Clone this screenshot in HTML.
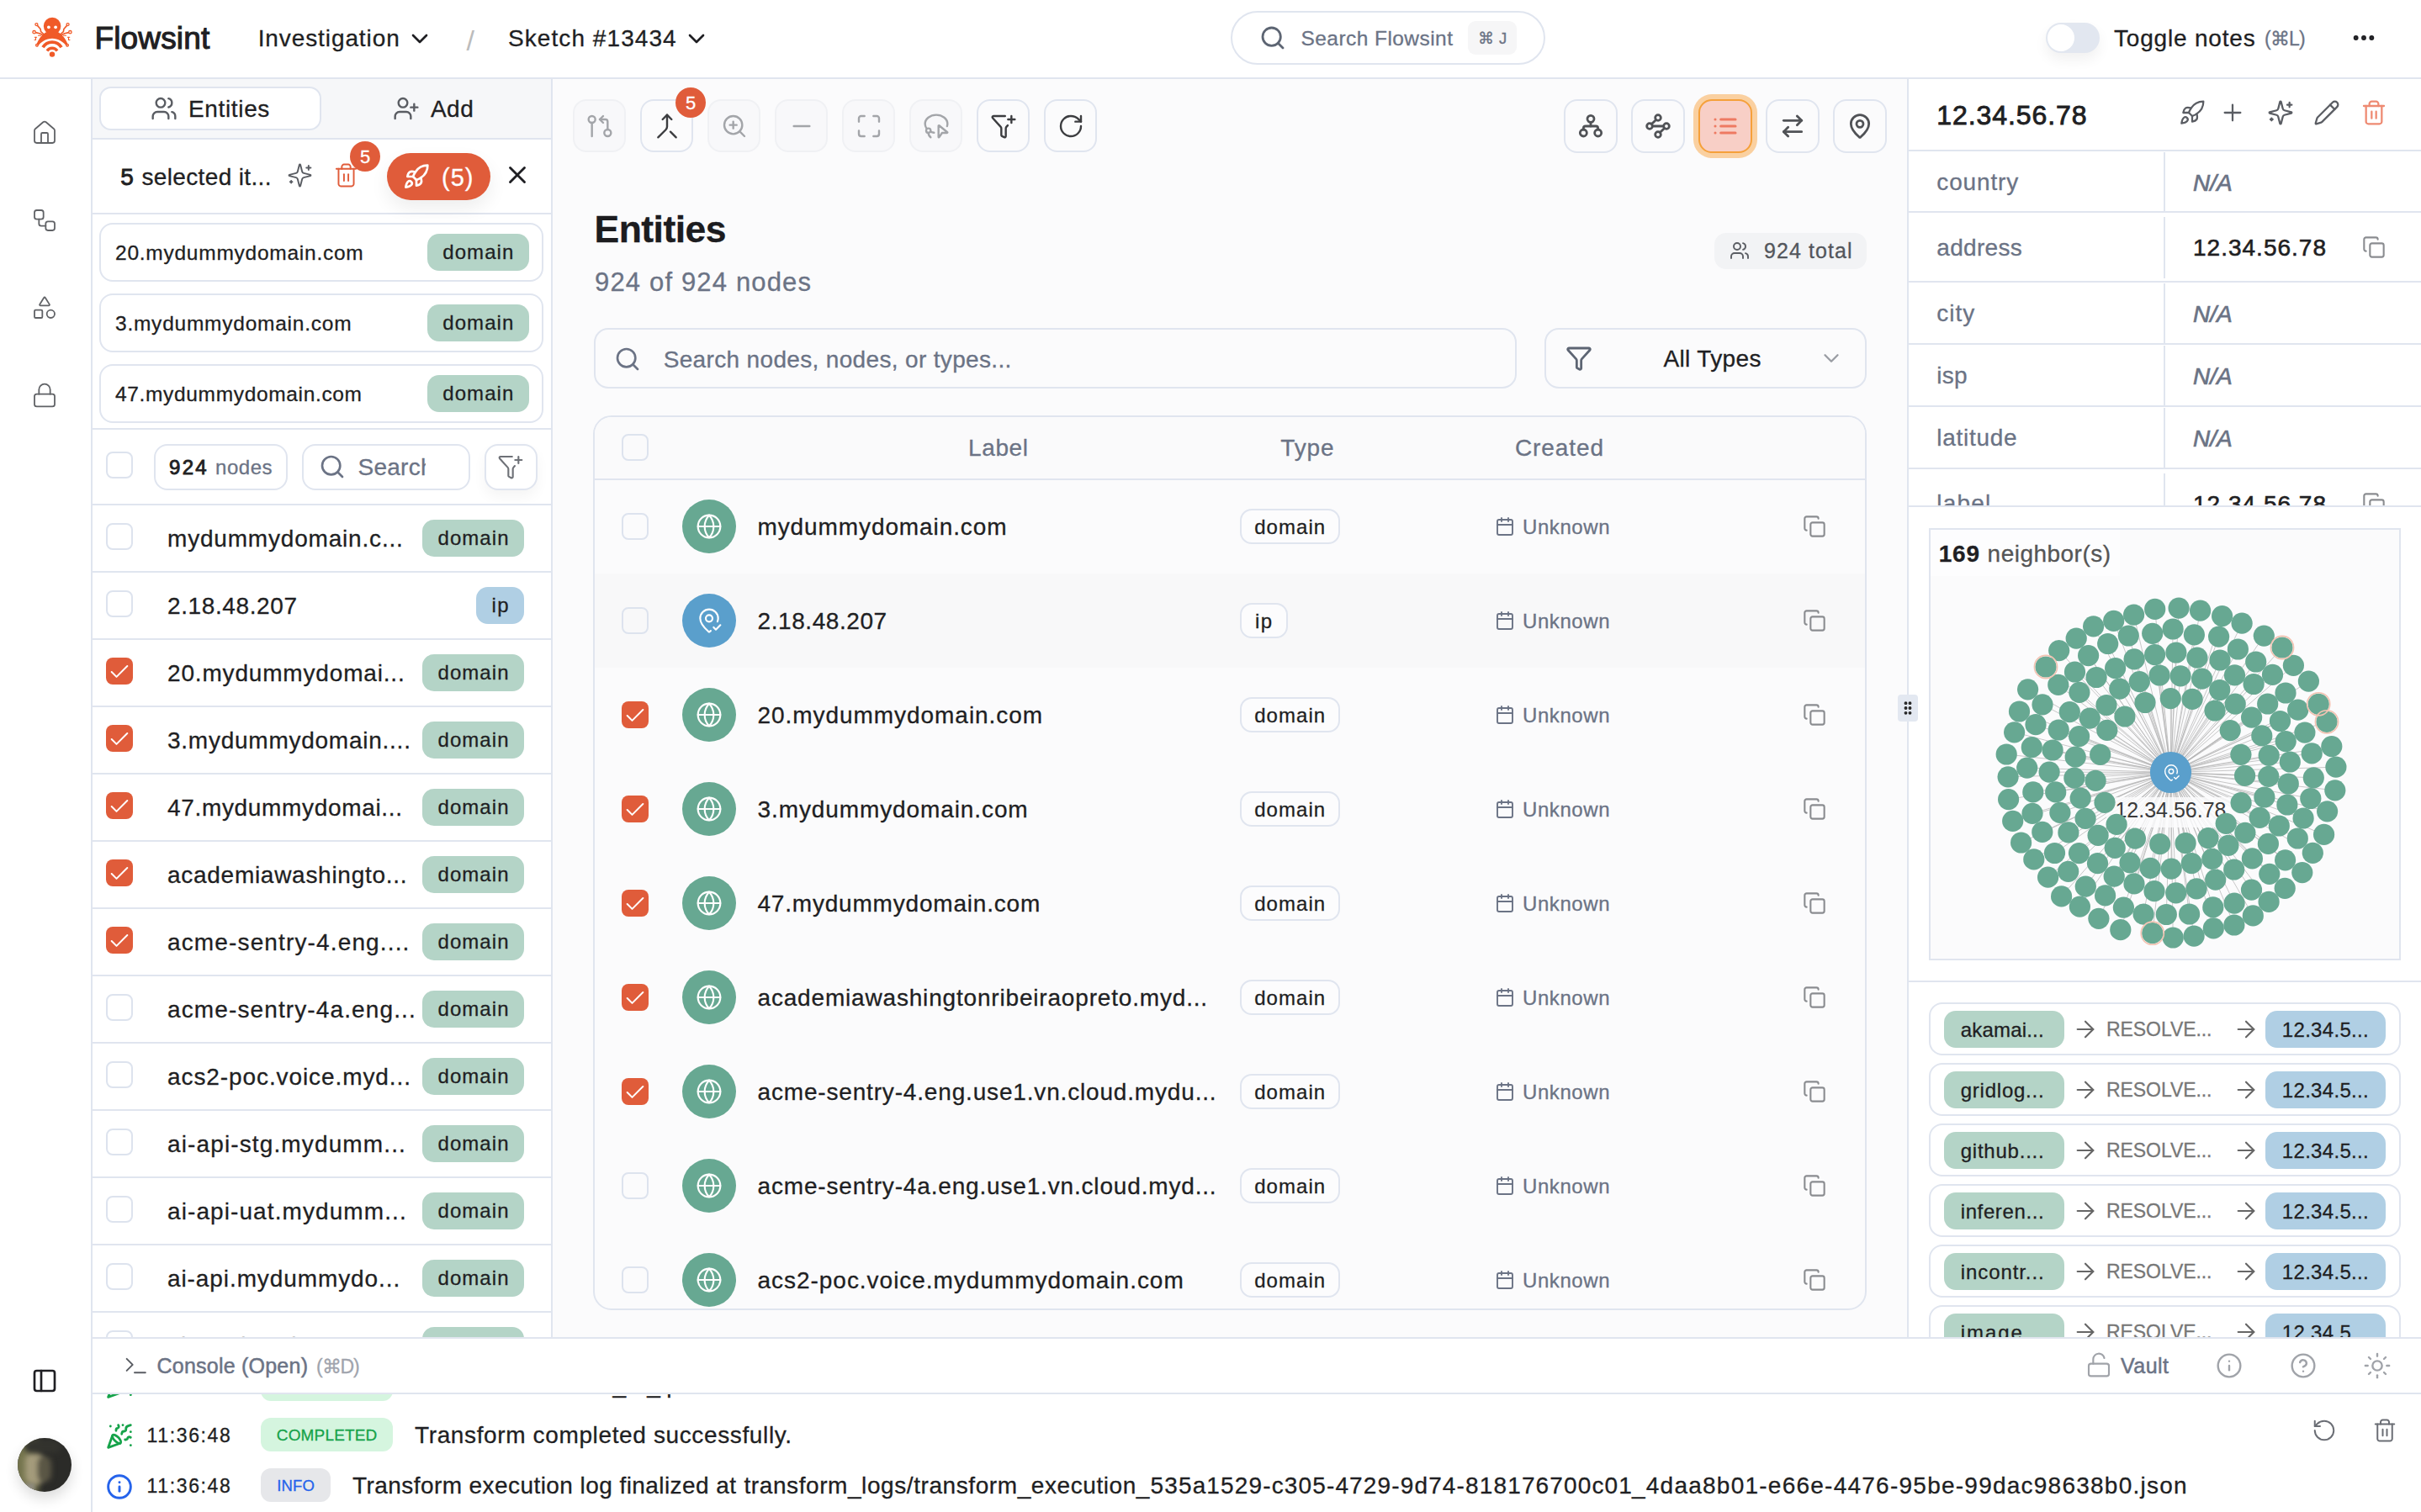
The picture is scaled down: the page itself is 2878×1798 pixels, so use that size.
<!DOCTYPE html><html lang="en"><head><meta charset="utf-8"><title>Flowsint</title><style>
*{box-sizing:border-box;margin:0;padding:0}
html,body{width:2878px;height:1798px;overflow:hidden;background:#fff;font-family:"Liberation Sans",sans-serif;color:#1f1f23}
.t{position:absolute;white-space:nowrap;line-height:1;-webkit-text-stroke:0.3px}
.i{position:absolute;fill:none;stroke:currentColor;stroke-linecap:round;stroke-linejoin:round;overflow:visible}
.b{position:absolute}
.clip{position:absolute;overflow:hidden}
.ln{position:absolute;background:#e0e5ef}
.cb{position:absolute;width:32px;height:32px;border:2px solid #dde3ee;border-radius:8px;background:transparent}
.cbc{position:absolute;width:32px;height:32px;border-radius:8px;background:#e05c3a}
.pill{position:absolute;border-radius:14px}
</style></head><body>
<div class="b" style="left:657px;top:94px;width:1611px;height:1498px;background:#fbfbfc"></div>
<div class="b" style="left:0px;top:0px;width:2878px;height:92px;background:#fff"></div>
<div class="ln" style="left:0;top:92px;width:2878px;height:2px"></div>
<svg class="b" style="left:36px;top:19px;width:52px;height:52px" viewBox="0 0 52 52">
<g fill="#f05a28" stroke="none">
<circle cx="26.1" cy="12" r="10.3"/>
<path d="M18.2 19.5Q10.5 24.5 6.6 35.6L8.6 36.4A20.6 20.6 0 0 1 43.4 36.4L45.4 35.600Q41.500 24.500 33.800 19.500Z"/>
<circle cx="26" cy="45.6" r="3.2"/>
</g>
<circle cx="21.9" cy="13.3" r="1.9" fill="#fff"/><circle cx="30.100" cy="13.300" r="1.900" fill="#fff"/>
<g fill="none" stroke="#f05a28" stroke-linecap="butt">
<path d="M14.98 37.300A13 13 0 0 1 37.020 37.300" stroke-width="3.800"/>
<path d="M19.980 41.400A7.350 7.350 0 0 1 32.020 41.400" stroke-width="3.400"/>
</g>
<g fill="none" stroke="#f05a28" stroke-linecap="round" stroke-linejoin="round" stroke-width="1.600">
<path d="M17 22.500L12.600 18.600L12.100 15.500L8.500 11.400"/><path d="M35 22.500L39.400 18.600L39.900 15.500L43.500 11.400"/>
<path d="M16.500 23.500L11 20.800L6.200 19.600"/><path d="M35.500 23.500L41 20.800L45.800 19.600"/>
<path d="M9.500 23.300h2.600l1.800 1.700M5.200 25.300h2.500M6.500 25.300v3.200M5 28.500h1.500" stroke-width="1"/>
<path d="M42.500 23.300h-2.600l-1.800 1.700M46.800 25.300h-2.500M45.500 25.300v3.200M47 28.500h-1.500" stroke-width="1"/>
</g>
<g fill="#fff" stroke="#f05a28" stroke-width="1.300">
<circle cx="7.400" cy="10.100" r="1.500"/><circle cx="44.600" cy="10.100" r="1.500"/>
<circle cx="4.600" cy="19.200" r="1.700"/><circle cx="47.400" cy="19.200" r="1.700"/>
<circle cx="7.900" cy="34.800" r="1.300"/><circle cx="44.100" cy="34.800" r="1.300"/>
</g>
</svg>
<div class="t" style="left:112.4px;top:27.0px;font-size:37px;color:#1f1f23;letter-spacing:0.17px;-webkit-text-stroke:1.1px #1f1f23;">Flowsint</div>
<div class="t" style="left:306.7px;top:32.0px;font-size:28px;color:#1f1f23;letter-spacing:0.90px;">Investigation</div>
<svg class="i" style="left:483.0px;top:30.0px;width:32px;height:32px;color:#1f1f23;stroke-width:2;" viewBox="0 0 24 24"><path d="m6 9 6 6 6-6"/></svg>
<div class="t" style="left:554.6px;top:31.0px;font-size:34px;color:#bcbcbc;letter-spacing:0.43px;-webkit-text-stroke:0;">/</div>
<div class="t" style="left:604.0px;top:32.0px;font-size:28px;color:#1f1f23;letter-spacing:1.07px;">Sketch #13434</div>
<svg class="i" style="left:812.0px;top:30.0px;width:32px;height:32px;color:#1f1f23;stroke-width:2;" viewBox="0 0 24 24"><path d="m6 9 6 6 6-6"/></svg>
<div class="b" style="left:1463px;top:13px;width:374px;height:64px;border:2px solid #e0e5ef;border-radius:32px;background:#fff"></div>
<svg class="i" style="left:1497.0px;top:29.0px;width:32px;height:32px;color:#5d6573;stroke-width:2.1;" viewBox="0 0 24 24"><circle cx="11" cy="11" r="8"/><path d="m21 21-4.3-4.3"/></svg>
<div class="t" style="left:1546.5px;top:34.0px;font-size:24.5px;color:#6b7385;letter-spacing:0.44px;">Search Flowsint</div>
<div class="b" style="left:1744.5px;top:25px;width:58.5px;height:39.5px;background:#f6f6f7;border-radius:9px"></div>
<div class="t" style="left:1757.0px;top:37.0px;font-size:18.5px;color:#6b7385;letter-spacing:0.37px;">⌘ J</div>
<div class="b" style="left:2432px;top:27px;width:64px;height:36px;background:#e2e7f0;border-radius:18px;box-shadow:0 8px 16px rgba(0,0,0,.06)"></div>
<div class="b" style="left:2434px;top:29px;width:32px;height:32px;background:#fff;border-radius:16px"></div>
<div class="t" style="left:2513.0px;top:32.0px;font-size:28px;color:#1f1f23;letter-spacing:0.81px;">Toggle notes</div>
<div class="t" style="left:2692.0px;top:35.0px;font-size:23px;color:#6b7385;letter-spacing:-0.79px;">(⌘L)</div>
<svg class="i" style="left:2794.0px;top:29.0px;width:32px;height:32px;color:#1f1f23;stroke-width:2.4;" viewBox="0 0 24 24"><circle cx="12" cy="12" r="1"/><circle cx="19" cy="12" r="1"/><circle cx="5" cy="12" r="1"/></svg>
<div class="b" style="left:0px;top:94px;width:108px;height:1704px;background:#fff"></div>
<div class="ln" style="left:108px;top:94px;width:2px;height:1704px"></div>
<svg class="i" style="left:37.0px;top:142.3px;width:32px;height:32px;color:#606266;stroke-width:1.35;" viewBox="0 0 24 24"><path d="M15 21v-8a1 1 0 0 0-1-1h-4a1 1 0 0 0-1 1v8"/><path d="M3 10a2 2 0 0 1 .709-1.528l7-5.999a2 2 0 0 1 2.582 0l7 5.999A2 2 0 0 1 21 10v9a2 2 0 0 1-2 2H5a2 2 0 0 1-2-2z"/></svg>
<svg class="i" style="left:37.0px;top:246.0px;width:32px;height:32px;color:#606266;stroke-width:1.35;" viewBox="0 0 24 24"><rect width="8" height="8" x="3" y="3" rx="2"/><path d="M7 11v4a2 2 0 0 0 2 2h4"/><rect width="8" height="8" x="13" y="13" rx="2"/></svg>
<svg class="i" style="left:37.0px;top:350.0px;width:32px;height:32px;color:#606266;stroke-width:1.35;" viewBox="0 0 24 24"><path d="M8.3 10a.7.7 0 0 1-.626-1.079L11.4 3a.7.7 0 0 1 1.198-.043L16.3 8.9a.7.7 0 0 1-.572 1.1Z"/><rect x="3" y="14" width="7" height="7" rx="1"/><circle cx="17.5" cy="17.5" r="3.5"/></svg>
<svg class="i" style="left:37.0px;top:454.0px;width:32px;height:32px;color:#606266;stroke-width:1.35;" viewBox="0 0 24 24"><rect width="18" height="11" x="3" y="11" rx="2" ry="2"/><path d="M7 11V7a5 5 0 0 1 10 0v4"/></svg>
<svg class="i" style="left:37.0px;top:1626.0px;width:32px;height:32px;color:#1f1f23;stroke-width:2;" viewBox="0 0 24 24"><rect width="18" height="18" x="3" y="3" rx="2"/><path d="M9 3v18"/></svg>
<div class="clip" style="left:21px;top:1710px;width:64px;height:64px;border-radius:32px;overflow:hidden;background:#2b2b28;box-shadow:0 8px 16px rgba(0,0,0,.14)"><div class="b" style="left:-6px;top:4px;width:30px;height:64px;background:#76764f;filter:blur(4px)"></div><div class="b" style="left:9px;top:16px;width:22px;height:40px;border-radius:11px;background:#a59c7c;filter:blur(3px)"></div><div class="b" style="left:24px;top:22px;width:16px;height:30px;border-radius:8px;background:#5a5645;filter:blur(3px)"></div><div class="b" style="left:8px;top:2px;width:44px;height:16px;border-radius:10px;background:#33332e;filter:blur(3px)"></div><div class="b" style="left:8px;top:54px;width:12px;height:12px;background:#8f8b80;filter:blur(2px)"></div></div>
<div class="b" style="left:110px;top:94px;width:545px;height:1498px;background:#fff"></div>
<div class="ln" style="left:654.6px;top:94px;width:2px;height:1498px"></div>
<div class="b" style="left:110px;top:94px;width:545px;height:70px;background:#f6f7f9"></div>
<div class="ln" style="left:110px;top:164px;width:545px;height:2px"></div>
<div class="b" style="left:118px;top:103px;width:264px;height:52px;background:#fff;border:2px solid #e0e5ef;border-radius:14px"></div>
<svg class="i" style="left:179.0px;top:113.0px;width:32px;height:32px;color:#5a5d63;stroke-width:1.8;" viewBox="0 0 24 24"><path d="M16 21v-2a4 4 0 0 0-4-4H6a4 4 0 0 0-4 4v2"/><circle cx="9" cy="7" r="4"/><path d="M22 21v-2a4 4 0 0 0-3-3.87"/><path d="M16 3.13a4 4 0 0 1 0 7.75"/></svg>
<div class="t" style="left:224.0px;top:116.0px;font-size:28px;color:#1f1f23;letter-spacing:0.65px;">Entities</div>
<svg class="i" style="left:467.0px;top:113.0px;width:32px;height:32px;color:#5a5d63;stroke-width:1.8;" viewBox="0 0 24 24"><path d="M16 21v-2a4 4 0 0 0-4-4H6a4 4 0 0 0-4 4v2"/><circle cx="9" cy="7" r="4"/><line x1="19" x2="19" y1="8" y2="14"/><line x1="22" x2="16" y1="11" y2="11"/></svg>
<div class="t" style="left:512.0px;top:116.0px;font-size:28px;color:#1f1f23;letter-spacing:0.44px;">Add</div>
<div class="ln" style="left:110px;top:253px;width:545px;height:2px"></div>
<div class="t" style="left:143.3px;top:197.0px;font-size:28px;color:#1f1f23;letter-spacing:0.70px;-webkit-text-stroke:0.9px #1f1f23;">5</div>
<div class="t" style="left:168.5px;top:197.0px;font-size:28px;color:#1f1f23;letter-spacing:0.35px;">selected it...</div>
<svg class="i" style="left:340.8px;top:192.5px;width:31px;height:31px;color:#5a5d63;stroke-width:1.5;" viewBox="0 0 24 24"><path d="M9.937 15.5A2 2 0 0 0 8.5 14.063l-6.135-1.582a.5.5 0 0 1 0-.962L8.5 9.936A2 2 0 0 0 9.937 8.5l1.582-6.135a.5.5 0 0 1 .963 0L14.063 8.5A2 2 0 0 0 15.5 9.937l6.135 1.581a.5.5 0 0 1 0 .964L15.5 14.063a2 2 0 0 0-1.437 1.437l-1.582 6.135a.5.5 0 0 1-.963 0z"/><path d="M20 3v4"/><path d="M22 5h-4"/><path d="M4 17v2"/><path d="M5 18H3"/></svg>
<svg class="i" style="left:396.0px;top:192.5px;width:31px;height:31px;color:#e05c3a;stroke-width:1.5;" viewBox="0 0 24 24"><path d="M3 6h18"/><path d="M19 6v14c0 1-1 2-2 2H7c-1 0-2-1-2-2V6"/><path d="M8 6V4c0-1 1-2 2-2h4c1 0 2 1 2 2v2"/><line x1="10" x2="10" y1="11" y2="17"/><line x1="14" x2="14" y1="11" y2="17"/></svg>
<div class="b" style="left:416px;top:168px;width:36px;height:36px;background:#e05c3a;border-radius:18px"></div>
<div class="t" style="left:427.9px;top:176.0px;font-size:22px;color:#fff;letter-spacing:0.55px;">5</div>
<div class="b" style="left:460px;top:182px;width:122.5px;height:56px;background:#e05c3a;border-radius:28px;box-shadow:0 10px 22px rgba(0,0,0,.07)"></div>
<svg class="i" style="left:479.0px;top:194.0px;width:32px;height:32px;color:#fff;stroke-width:2;" viewBox="0 0 24 24"><path d="M4.5 16.5c-1.5 1.26-2 5-2 5s3.74-.5 5-2c.71-.84.7-2.13-.09-2.91a2.18 2.18 0 0 0-2.91-.09z"/><path d="m12 15-3-3a22 22 0 0 1 2-3.95A12.88 12.88 0 0 1 22 2c0 2.72-.78 7.5-6 11a22.35 22.35 0 0 1-4 2z"/><path d="M9 12H4s.55-3.03 2-4c1.62-1.08 5 0 5 0"/><path d="M12 15v5s3.03-.55 4-2c1.08-1.62 0-5 0-5"/></svg>
<div class="t" style="left:525.0px;top:197.0px;font-size:29px;color:#fff;letter-spacing:1.03px;">(5)</div>
<svg class="i" style="left:598.0px;top:191.0px;width:34px;height:34px;color:#1f1f23;stroke-width:2;" viewBox="0 0 24 24"><path d="M18 6 6 18"/><path d="m6 6 12 12"/></svg>
<div class="b" style="left:118px;top:264.5px;width:528px;height:70.6px;background:#fff;border:2px solid #e0e5ef;border-radius:16px"></div>
<div class="t" style="left:137.0px;top:289.0px;font-size:24.5px;color:#1f1f23;letter-spacing:0.75px;">20.mydummydomain.com</div>
<div class="pill" style="left:508px;top:278px;width:120.6px;height:43.5px;background:#b4d4c7"></div><div class="t" style="left:526.3px;top:288.0px;font-size:24px;color:#1f1f23;letter-spacing:1.06px;">domain</div>
<div class="b" style="left:118px;top:348.5px;width:528px;height:70.6px;background:#fff;border:2px solid #e0e5ef;border-radius:16px"></div>
<div class="t" style="left:137.0px;top:373.0px;font-size:24.5px;color:#1f1f23;letter-spacing:0.76px;">3.mydummydomain.com</div>
<div class="pill" style="left:508px;top:362px;width:120.6px;height:43.5px;background:#b4d4c7"></div><div class="t" style="left:526.3px;top:372.0px;font-size:24px;color:#1f1f23;letter-spacing:1.06px;">domain</div>
<div class="b" style="left:118px;top:432.5px;width:528px;height:70.6px;background:#fff;border:2px solid #e0e5ef;border-radius:16px"></div>
<div class="t" style="left:137.0px;top:457.0px;font-size:24.5px;color:#1f1f23;letter-spacing:0.66px;">47.mydummydomain.com</div>
<div class="pill" style="left:508px;top:446px;width:120.6px;height:43.5px;background:#b4d4c7"></div><div class="t" style="left:526.3px;top:456.0px;font-size:24px;color:#1f1f23;letter-spacing:1.06px;">domain</div>
<div class="ln" style="left:110px;top:509px;width:545px;height:2px"></div>
<div class="cb" style="left:126px;top:537px"></div>
<div class="b" style="left:182.5px;top:527.5px;width:159px;height:55px;border:2px solid #e0e5ef;border-radius:16px;background:#fff"></div>
<div class="t" style="left:201.0px;top:544.0px;font-size:24px;color:#1f1f23;letter-spacing:2.33px;-webkit-text-stroke:0.9px #1f1f23;">924</div>
<div class="t" style="left:256.0px;top:544.0px;font-size:24px;color:#6b7385;letter-spacing:0.53px;">nodes</div>
<div class="b" style="left:358.5px;top:527.5px;width:200px;height:55px;border:2px solid #e0e5ef;border-radius:16px;background:#fff"></div>
<svg class="i" style="left:378.5px;top:539.0px;width:32px;height:32px;color:#6b7385;stroke-width:2;" viewBox="0 0 24 24"><circle cx="11" cy="11" r="8"/><path d="m21 21-4.3-4.3"/></svg>
<div class="clip" style="left:420px;top:535px;width:85.5px;height:40px"><div class="t" style="left:5.5px;top:7.0px;font-size:28px;color:#6b7385;letter-spacing:0.26px;">Search</div></div>
<div class="b" style="left:576px;top:527.5px;width:62.5px;height:55px;border:2px solid #e0e5ef;border-radius:16px;background:#fff;box-shadow:0 8px 16px rgba(0,0,0,.045)"></div>
<svg class="i" style="left:591.0px;top:539.0px;width:32px;height:32px;color:#6e7177;stroke-width:1.6;" viewBox="0 0 24 24"><path d="M13.354 3H3a1 1 0 0 0-.742 1.67l7.225 7.989A2 2 0 0 1 10 14v6a1 1 0 0 0 .553.895l2 1A1 1 0 0 0 14 21v-7a2 2 0 0 1 .517-1.341l1.218-1.348"/><path d="M16 6h6"/><path d="M19 3v6"/></svg>
<div class="ln" style="left:110px;top:599px;width:545px;height:2px"></div>
<div class="clip" style="left:110px;top:601px;width:545px;height:990px">
<div class="cb" style="left:16px;top:21px"></div>
<div class="t" style="left:89.0px;top:26.0px;font-size:28px;color:#1f1f23;letter-spacing:0.81px;">mydummydomain.c...</div>
<div class="pill" style="left:392px;top:17px;width:121px;height:44px;background:#b4d4c7"></div><div class="t" style="left:410.5px;top:27.0px;font-size:24px;color:#1f1f23;letter-spacing:1.06px;">domain</div>
<div class="ln" style="left:0;top:78px;width:545px;height:2px"></div>
<div class="cb" style="left:16px;top:101px"></div>
<div class="t" style="left:89.0px;top:106.0px;font-size:28px;color:#1f1f23;letter-spacing:0.61px;">2.18.48.207</div>
<div class="pill" style="left:456px;top:97px;width:57px;height:44px;background:#b0cfe4"></div><div class="t" style="left:474.5px;top:107.0px;font-size:24px;color:#1f1f23;letter-spacing:1.32px;">ip</div>
<div class="ln" style="left:0;top:158px;width:545px;height:2px"></div>
<div class="cbc" style="left:16px;top:181px"></div><svg class="i" style="left:18.0px;top:183.5px;width:28px;height:28px;color:#fff;stroke-width:1.7;" viewBox="0 0 24 24"><path d="M20 6 9 17l-5-5"/></svg>
<div class="t" style="left:89.0px;top:186.0px;font-size:28px;color:#1f1f23;letter-spacing:0.83px;">20.mydummydomai...</div>
<div class="pill" style="left:392px;top:177px;width:121px;height:44px;background:#b4d4c7"></div><div class="t" style="left:410.5px;top:187.0px;font-size:24px;color:#1f1f23;letter-spacing:1.06px;">domain</div>
<div class="ln" style="left:0;top:238px;width:545px;height:2px"></div>
<div class="cbc" style="left:16px;top:261px"></div><svg class="i" style="left:18.0px;top:263.5px;width:28px;height:28px;color:#fff;stroke-width:1.7;" viewBox="0 0 24 24"><path d="M20 6 9 17l-5-5"/></svg>
<div class="t" style="left:89.0px;top:266.0px;font-size:28px;color:#1f1f23;letter-spacing:0.75px;">3.mydummydomain....</div>
<div class="pill" style="left:392px;top:257px;width:121px;height:44px;background:#b4d4c7"></div><div class="t" style="left:410.5px;top:267.0px;font-size:24px;color:#1f1f23;letter-spacing:1.06px;">domain</div>
<div class="ln" style="left:0;top:318px;width:545px;height:2px"></div>
<div class="cbc" style="left:16px;top:341px"></div><svg class="i" style="left:18.0px;top:343.5px;width:28px;height:28px;color:#fff;stroke-width:1.7;" viewBox="0 0 24 24"><path d="M20 6 9 17l-5-5"/></svg>
<div class="t" style="left:89.0px;top:346.0px;font-size:28px;color:#1f1f23;letter-spacing:0.67px;">47.mydummydomai...</div>
<div class="pill" style="left:392px;top:337px;width:121px;height:44px;background:#b4d4c7"></div><div class="t" style="left:410.5px;top:347.0px;font-size:24px;color:#1f1f23;letter-spacing:1.06px;">domain</div>
<div class="ln" style="left:0;top:398px;width:545px;height:2px"></div>
<div class="cbc" style="left:16px;top:421px"></div><svg class="i" style="left:18.0px;top:423.5px;width:28px;height:28px;color:#fff;stroke-width:1.7;" viewBox="0 0 24 24"><path d="M20 6 9 17l-5-5"/></svg>
<div class="t" style="left:89.0px;top:426.0px;font-size:28px;color:#1f1f23;letter-spacing:0.72px;">academiawashingto...</div>
<div class="pill" style="left:392px;top:417px;width:121px;height:44px;background:#b4d4c7"></div><div class="t" style="left:410.5px;top:427.0px;font-size:24px;color:#1f1f23;letter-spacing:1.06px;">domain</div>
<div class="ln" style="left:0;top:478px;width:545px;height:2px"></div>
<div class="cbc" style="left:16px;top:501px"></div><svg class="i" style="left:18.0px;top:503.5px;width:28px;height:28px;color:#fff;stroke-width:1.7;" viewBox="0 0 24 24"><path d="M20 6 9 17l-5-5"/></svg>
<div class="t" style="left:89.0px;top:506.0px;font-size:28px;color:#1f1f23;letter-spacing:1.14px;">acme-sentry-4.eng....</div>
<div class="pill" style="left:392px;top:497px;width:121px;height:44px;background:#b4d4c7"></div><div class="t" style="left:410.5px;top:507.0px;font-size:24px;color:#1f1f23;letter-spacing:1.06px;">domain</div>
<div class="ln" style="left:0;top:558px;width:545px;height:2px"></div>
<div class="cb" style="left:16px;top:581px"></div>
<div class="t" style="left:89.0px;top:586.0px;font-size:28px;color:#1f1f23;letter-spacing:1.12px;">acme-sentry-4a.eng...</div>
<div class="pill" style="left:392px;top:577px;width:121px;height:44px;background:#b4d4c7"></div><div class="t" style="left:410.5px;top:587.0px;font-size:24px;color:#1f1f23;letter-spacing:1.06px;">domain</div>
<div class="ln" style="left:0;top:638px;width:545px;height:2px"></div>
<div class="cb" style="left:16px;top:661px"></div>
<div class="t" style="left:89.0px;top:666.0px;font-size:28px;color:#1f1f23;letter-spacing:0.91px;">acs2-poc.voice.myd...</div>
<div class="pill" style="left:392px;top:657px;width:121px;height:44px;background:#b4d4c7"></div><div class="t" style="left:410.5px;top:667.0px;font-size:24px;color:#1f1f23;letter-spacing:1.06px;">domain</div>
<div class="ln" style="left:0;top:718px;width:545px;height:2px"></div>
<div class="cb" style="left:16px;top:741px"></div>
<div class="t" style="left:89.0px;top:746.0px;font-size:28px;color:#1f1f23;letter-spacing:1.13px;">ai-api-stg.mydumm...</div>
<div class="pill" style="left:392px;top:737px;width:121px;height:44px;background:#b4d4c7"></div><div class="t" style="left:410.5px;top:747.0px;font-size:24px;color:#1f1f23;letter-spacing:1.06px;">domain</div>
<div class="ln" style="left:0;top:798px;width:545px;height:2px"></div>
<div class="cb" style="left:16px;top:821px"></div>
<div class="t" style="left:89.0px;top:826.0px;font-size:28px;color:#1f1f23;letter-spacing:1.09px;">ai-api-uat.mydumm...</div>
<div class="pill" style="left:392px;top:817px;width:121px;height:44px;background:#b4d4c7"></div><div class="t" style="left:410.5px;top:827.0px;font-size:24px;color:#1f1f23;letter-spacing:1.06px;">domain</div>
<div class="ln" style="left:0;top:878px;width:545px;height:2px"></div>
<div class="cb" style="left:16px;top:901px"></div>
<div class="t" style="left:89.0px;top:906.0px;font-size:28px;color:#1f1f23;letter-spacing:0.91px;">ai-api.mydummydo...</div>
<div class="pill" style="left:392px;top:897px;width:121px;height:44px;background:#b4d4c7"></div><div class="t" style="left:410.5px;top:907.0px;font-size:24px;color:#1f1f23;letter-spacing:1.06px;">domain</div>
<div class="ln" style="left:0;top:958px;width:545px;height:2px"></div>
<div class="cb" style="left:16px;top:981px"></div>
<div class="t" style="left:89.0px;top:986.0px;font-size:28px;color:#1f1f23;letter-spacing:0.48px;">ai-services.io.m...</div>
<div class="pill" style="left:392px;top:977px;width:121px;height:44px;background:#b4d4c7"></div><div class="t" style="left:410.5px;top:987.0px;font-size:24px;color:#1f1f23;letter-spacing:1.06px;">domain</div>
<div class="ln" style="left:0;top:1038px;width:545px;height:2px"></div>
</div>
<div class="b" style="left:681px;top:118px;width:63px;height:63px;border:2px solid #f0f1f4;border-radius:16px;background:#f8f8fa"></div>
<svg class="i" style="left:696.5px;top:133.5px;width:32px;height:32px;color:#a3a5a9;stroke-width:1.8;" viewBox="0 0 24 24"><circle cx="5" cy="6" r="3"/><path d="M5 9v12"/><circle cx="19" cy="18" r="3"/><path d="m15 9-3-3 3-3"/><path d="M12 6h5a2 2 0 0 1 2 2v7"/></svg>
<div class="b" style="left:761px;top:118px;width:63px;height:63px;border:2px solid #e0e5ef;border-radius:16px;background:#fbfbfc"></div>
<svg class="i" style="left:776.5px;top:133.5px;width:32px;height:32px;color:#3c3d40;stroke-width:1.8;" viewBox="0 0 24 24"><path d="m8 6 4-4 4 4"/><path d="M12 2v10.3a4 4 0 0 1-1.172 2.872L4 22"/><path d="m20 22-5-5"/></svg>
<div class="b" style="left:841px;top:118px;width:63px;height:63px;border:2px solid #f0f1f4;border-radius:16px;background:#f8f8fa"></div>
<svg class="i" style="left:856.5px;top:133.5px;width:32px;height:32px;color:#a3a5a9;stroke-width:1.8;" viewBox="0 0 24 24"><circle cx="11" cy="11" r="8"/><line x1="21" x2="16.65" y1="21" y2="16.65"/><line x1="11" x2="11" y1="8" y2="14"/><line x1="8" x2="14" y1="11" y2="11"/></svg>
<div class="b" style="left:921px;top:118px;width:63px;height:63px;border:2px solid #f0f1f4;border-radius:16px;background:#f8f8fa"></div>
<svg class="i" style="left:936.5px;top:133.5px;width:32px;height:32px;color:#a3a5a9;stroke-width:1.8;" viewBox="0 0 24 24"><path d="M5 12h14"/></svg>
<div class="b" style="left:1001px;top:118px;width:63px;height:63px;border:2px solid #f0f1f4;border-radius:16px;background:#f8f8fa"></div>
<svg class="i" style="left:1016.5px;top:133.5px;width:32px;height:32px;color:#a3a5a9;stroke-width:1.8;" viewBox="0 0 24 24"><path d="M8 3H5a2 2 0 0 0-2 2v3"/><path d="M21 8V5a2 2 0 0 0-2-2h-3"/><path d="M3 16v3a2 2 0 0 0 2 2h3"/><path d="M16 21h3a2 2 0 0 0 2-2v-3"/></svg>
<div class="b" style="left:1081px;top:118px;width:63px;height:63px;border:2px solid #f0f1f4;border-radius:16px;background:#f8f8fa"></div>
<svg class="i" style="left:1096.5px;top:133.5px;width:32px;height:32px;color:#a3a5a9;stroke-width:1.8;" viewBox="0 0 24 24"><path d="M7 22a5 5 0 0 1-2-4"/><path d="M7 16.93c.96.43 1.96.74 2.99.91"/><path d="M3.34 14A6.8 6.8 0 0 1 2 10c0-4.42 4.48-8 10-8s10 3.58 10 8a7.19 7.19 0 0 1-.33 2"/><path d="M5 18a2 2 0 1 0 0-4 2 2 0 0 0 0 4z"/><path d="M14.33 22h-.09a.35.35 0 0 1-.24-.32v-10a.34.34 0 0 1 .33-.34c.08 0 .15.03.21.08l7.34 6a.33.33 0 0 1-.21.59h-4.49l-2.57 3.85a.35.35 0 0 1-.28.14z"/></svg>
<div class="b" style="left:1161px;top:118px;width:63px;height:63px;border:2px solid #e0e5ef;border-radius:16px;background:#fbfbfc"></div>
<svg class="i" style="left:1176.5px;top:133.5px;width:32px;height:32px;color:#3c3d40;stroke-width:1.8;" viewBox="0 0 24 24"><path d="M13.354 3H3a1 1 0 0 0-.742 1.67l7.225 7.989A2 2 0 0 1 10 14v6a1 1 0 0 0 .553.895l2 1A1 1 0 0 0 14 21v-7a2 2 0 0 1 .517-1.341l1.218-1.348"/><path d="M16 6h6"/><path d="M19 3v6"/></svg>
<div class="b" style="left:1241px;top:118px;width:63px;height:63px;border:2px solid #e0e5ef;border-radius:16px;background:#fbfbfc"></div>
<svg class="i" style="left:1256.5px;top:133.5px;width:32px;height:32px;color:#3c3d40;stroke-width:1.8;" viewBox="0 0 24 24"><path d="M21 12a9 9 0 1 1-9-9c2.52 0 4.93 1 6.74 2.74L21 8"/><path d="M21 3v5h-5"/></svg>
<div class="b" style="left:803px;top:104px;width:36px;height:36px;background:#e05c3a;border-radius:18px"></div>
<div class="t" style="left:814.9px;top:112.0px;font-size:22px;color:#fff;letter-spacing:0.55px;">5</div>
<div class="b" style="left:1859px;top:118px;width:64px;height:64px;border:2px solid #e0e5ef;border-radius:16px;background:#fbfbfc"></div>
<svg class="i" style="left:1874.8px;top:133.8px;width:32px;height:32px;color:#505256;stroke-width:2.1;" viewBox="0 0 24 24"><circle cx="12" cy="5.5" r="3"/><circle cx="5.5" cy="18" r="3"/><circle cx="18.5" cy="18" r="3"/><path d="M12 8.5V12"/><path d="M5.5 15v-1a2 2 0 0 1 2-2h9a2 2 0 0 1 2 2v1"/></svg>
<div class="b" style="left:1939px;top:118px;width:64px;height:64px;border:2px solid #e0e5ef;border-radius:16px;background:#fbfbfc"></div>
<svg class="i" style="left:1954.8px;top:133.8px;width:32px;height:32px;color:#505256;stroke-width:2.1;" viewBox="0 0 24 24"><circle cx="12" cy="4.5" r="2.5"/><path d="m10.2 6.3-3.9 3.9"/><circle cx="4.5" cy="12" r="2.5"/><path d="M7 12h10"/><circle cx="19.5" cy="12" r="2.5"/><path d="m13.8 17.7 3.9-3.9"/><circle cx="12" cy="19.5" r="2.5"/></svg>
<div class="b" style="left:2013px;top:112px;width:76px;height:76px;border-radius:22px;background:#fad0a0"></div>
<div class="b" style="left:2019px;top:118px;width:64px;height:64px;border:2.5px solid #f5a03a;border-radius:16px;background:#f8cfc6"></div>
<svg class="i" style="left:2034.8px;top:133.8px;width:32px;height:32px;color:#ee7a62;stroke-width:2.3;" viewBox="0 0 24 24"><path d="M3 12h.01"/><path d="M3 18h.01"/><path d="M3 6h.01"/><path d="M8 12h13"/><path d="M8 18h13"/><path d="M8 6h13"/></svg>
<div class="b" style="left:2099px;top:118px;width:64px;height:64px;border:2px solid #e0e5ef;border-radius:16px;background:#fbfbfc"></div>
<svg class="i" style="left:2114.8px;top:133.8px;width:32px;height:32px;color:#505256;stroke-width:2.1;" viewBox="0 0 24 24"><path d="m16 3 4 4-4 4"/><path d="M20 7H4"/><path d="m8 21-4-4 4-4"/><path d="M4 17h16"/></svg>
<div class="b" style="left:2179px;top:118px;width:64px;height:64px;border:2px solid #e0e5ef;border-radius:16px;background:#fbfbfc"></div>
<svg class="i" style="left:2194.8px;top:133.8px;width:32px;height:32px;color:#505256;stroke-width:2.1;" viewBox="0 0 24 24"><path d="M20 10c0 4.993-5.539 10.193-7.399 11.799a1 1 0 0 1-1.202 0C9.539 20.193 4 14.993 4 10a8 8 0 0 1 16 0"/><circle cx="12" cy="10" r="3"/></svg>
<div class="t" style="left:706.5px;top:251.0px;font-size:44.5px;color:#1c1c1f;letter-spacing:-0.53px;font-weight:700;">Entities</div>
<div class="t" style="left:707.0px;top:320.0px;font-size:31px;color:#6b7385;letter-spacing:1.16px;">924 of 924 nodes</div>
<div class="b" style="left:2038px;top:276.5px;width:180.5px;height:43px;background:#f2f3f5;border-radius:14px"></div>
<svg class="i" style="left:2055.5px;top:286.0px;width:24px;height:24px;color:#5a5d63;stroke-width:1.9;" viewBox="0 0 24 24"><path d="M16 21v-2a4 4 0 0 0-4-4H6a4 4 0 0 0-4 4v2"/><circle cx="9" cy="7" r="4"/><path d="M22 21v-2a4 4 0 0 0-3-3.87"/><path d="M16 3.13a4 4 0 0 1 0 7.75"/></svg>
<div class="t" style="left:2097.0px;top:286.0px;font-size:25px;color:#53565c;letter-spacing:1.07px;">924 total</div>
<div class="b" style="left:705.5px;top:390px;width:1097px;height:72px;border:2px solid #e0e5ef;border-radius:17px;background:#fbfbfc"></div>
<svg class="i" style="left:730.0px;top:411.0px;width:32px;height:32px;color:#6b7385;stroke-width:2;" viewBox="0 0 24 24"><circle cx="11" cy="11" r="8"/><path d="m21 21-4.3-4.3"/></svg>
<div class="t" style="left:788.7px;top:414.0px;font-size:28px;color:#6b7385;letter-spacing:0.34px;">Search nodes, nodes, or types...</div>
<div class="b" style="left:1835.5px;top:390px;width:383px;height:72px;border:2px solid #e0e5ef;border-radius:17px;background:#fbfbfc"></div>
<svg class="i" style="left:1860.5px;top:410.0px;width:32px;height:32px;color:#5d6573;stroke-width:2.1;" viewBox="0 0 24 24"><path d="M10 20a1 1 0 0 0 .553.895l2 1A1 1 0 0 0 14 21v-7a2 2 0 0 1 .517-1.341L21.74 4.67A1 1 0 0 0 21 3H3a1 1 0 0 0-.742 1.67l7.225 7.989A2 2 0 0 1 10 14z"/></svg>
<div class="t" style="left:1977.5px;top:413.0px;font-size:28px;color:#1f1f23;letter-spacing:0.36px;">All Types</div>
<svg class="i" style="left:2161.5px;top:411.0px;width:30px;height:30px;color:#9a9da3;stroke-width:1.9;" viewBox="0 0 24 24"><path d="m6 9 6 6 6-6"/></svg>
<div class="b" style="left:704.5px;top:494px;width:1514px;height:1064px;border:2px solid #e0e5ef;border-radius:22px;background:#fbfbfc"></div>
<div class="clip" style="left:706.5px;top:496px;width:1510px;height:1060px;border-radius:20px"><div class="b" style="left:1.5px;top:1px;width:1508px;height:1059px">
<div class="b" style="left:-2px;top:-1px;width:1512px;height:73px;background:#fafafb"></div>
<div class="ln" style="left:-2px;top:72px;width:1512px;height:2px"></div>
<div class="cb" style="left:31px;top:18.6px"></div>
<div class="t" style="left:443.0px;top:22.0px;font-size:28px;color:#6b7385;letter-spacing:0.62px;">Label</div>
<div class="t" style="left:814.2px;top:22.0px;font-size:28px;color:#6b7385;letter-spacing:0.93px;">Type</div>
<div class="t" style="left:1093.0px;top:22.0px;font-size:28px;color:#6b7385;letter-spacing:0.90px;">Created</div>
<div class="cb" style="left:31px;top:113px"></div>
<div class="b" style="left:102.5px;top:97px;width:64px;height:64px;border-radius:32px;background:#67a892"></div>
<svg class="i" style="left:118.5px;top:113.0px;width:32px;height:32px;color:#fff;stroke-width:1.6;" viewBox="0 0 24 24"><circle cx="12" cy="12" r="10"/><path d="M12 2a14.5 14.5 0 0 0 0 20 14.5 14.5 0 0 0 0-20"/><path d="M2 12h20"/></svg>
<div class="t" style="left:192.5px;top:116.0px;font-size:28px;color:#1f1f23;letter-spacing:0.90px;">mydummydomain.com</div>
<div class="b" style="left:765.5px;top:108px;width:119.5px;height:42px;border:2px solid #e0e5ef;border-radius:14px;background:#fcfcfd"></div>
<div class="t" style="left:783.2px;top:118.0px;font-size:24px;color:#1f1f23;letter-spacing:1.06px;">domain</div>
<svg class="i" style="left:1068.5px;top:117.0px;width:24px;height:24px;color:#6b7385;stroke-width:1.9;" viewBox="0 0 24 24"><path d="M8 2v4"/><path d="M16 2v4"/><rect width="18" height="18" x="3" y="4" rx="2"/><path d="M3 10h18"/></svg>
<div class="t" style="left:1102.0px;top:118.0px;font-size:24px;color:#6b7385;letter-spacing:0.57px;">Unknown</div>
<svg class="i" style="left:1434.8px;top:114.7px;width:28px;height:28px;color:#8a8c90;stroke-width:1.8;" viewBox="0 0 24 24"><rect width="14" height="14" x="8" y="8" rx="2" ry="2"/><path d="M4 16c-1.1 0-2-.9-2-2V4c0-1.1.9-2 2-2h10c1.1 0 2 .9 2 2"/></svg>
<div class="b" style="left:-2px;top:185px;width:1512px;height:112px;background:#f8f8f9"></div>
<div class="cb" style="left:31px;top:225px"></div>
<div class="b" style="left:102.5px;top:209px;width:64px;height:64px;border-radius:32px;background:#5a9fcc"></div>
<svg class="i" style="left:118.5px;top:225.0px;width:32px;height:32px;color:#fff;stroke-width:1.6;" viewBox="0 0 24 24"><path d="M19.43 12.935c.357-.967.57-1.955.57-2.935a8 8 0 0 0-16 0c0 4.993 5.539 10.193 7.399 11.799a1 1 0 0 0 1.202 0 32.197 32.197 0 0 0 .813-.728"/><circle cx="12" cy="10" r="3"/><path d="m16 18 2 2 4-4"/></svg>
<div class="t" style="left:192.5px;top:228.0px;font-size:28px;color:#1f1f23;letter-spacing:0.57px;">2.18.48.207</div>
<div class="b" style="left:765.5px;top:220px;width:57px;height:42px;border:2px solid #e0e5ef;border-radius:14px;background:#fcfcfd"></div>
<div class="t" style="left:784.0px;top:230.0px;font-size:24px;color:#1f1f23;letter-spacing:1.32px;">ip</div>
<svg class="i" style="left:1068.5px;top:229.0px;width:24px;height:24px;color:#6b7385;stroke-width:1.9;" viewBox="0 0 24 24"><path d="M8 2v4"/><path d="M16 2v4"/><rect width="18" height="18" x="3" y="4" rx="2"/><path d="M3 10h18"/></svg>
<div class="t" style="left:1102.0px;top:230.0px;font-size:24px;color:#6b7385;letter-spacing:0.57px;">Unknown</div>
<svg class="i" style="left:1434.8px;top:226.7px;width:28px;height:28px;color:#8a8c90;stroke-width:1.8;" viewBox="0 0 24 24"><rect width="14" height="14" x="8" y="8" rx="2" ry="2"/><path d="M4 16c-1.1 0-2-.9-2-2V4c0-1.1.9-2 2-2h10c1.1 0 2 .9 2 2"/></svg>
<div class="cbc" style="left:31px;top:337px"></div><svg class="i" style="left:33.0px;top:339.5px;width:28px;height:28px;color:#fff;stroke-width:1.7;" viewBox="0 0 24 24"><path d="M20 6 9 17l-5-5"/></svg>
<div class="b" style="left:102.5px;top:321px;width:64px;height:64px;border-radius:32px;background:#67a892"></div>
<svg class="i" style="left:118.5px;top:337.0px;width:32px;height:32px;color:#fff;stroke-width:1.6;" viewBox="0 0 24 24"><circle cx="12" cy="12" r="10"/><path d="M12 2a14.5 14.5 0 0 0 0 20 14.5 14.5 0 0 0 0-20"/><path d="M2 12h20"/></svg>
<div class="t" style="left:192.5px;top:340.0px;font-size:28px;color:#1f1f23;letter-spacing:0.95px;">20.mydummydomain.com</div>
<div class="b" style="left:765.5px;top:332px;width:119.5px;height:42px;border:2px solid #e0e5ef;border-radius:14px;background:#fcfcfd"></div>
<div class="t" style="left:783.2px;top:342.0px;font-size:24px;color:#1f1f23;letter-spacing:1.06px;">domain</div>
<svg class="i" style="left:1068.5px;top:341.0px;width:24px;height:24px;color:#6b7385;stroke-width:1.9;" viewBox="0 0 24 24"><path d="M8 2v4"/><path d="M16 2v4"/><rect width="18" height="18" x="3" y="4" rx="2"/><path d="M3 10h18"/></svg>
<div class="t" style="left:1102.0px;top:342.0px;font-size:24px;color:#6b7385;letter-spacing:0.57px;">Unknown</div>
<svg class="i" style="left:1434.8px;top:338.7px;width:28px;height:28px;color:#8a8c90;stroke-width:1.8;" viewBox="0 0 24 24"><rect width="14" height="14" x="8" y="8" rx="2" ry="2"/><path d="M4 16c-1.1 0-2-.9-2-2V4c0-1.1.9-2 2-2h10c1.1 0 2 .9 2 2"/></svg>
<div class="cbc" style="left:31px;top:449px"></div><svg class="i" style="left:33.0px;top:451.5px;width:28px;height:28px;color:#fff;stroke-width:1.7;" viewBox="0 0 24 24"><path d="M20 6 9 17l-5-5"/></svg>
<div class="b" style="left:102.5px;top:433px;width:64px;height:64px;border-radius:32px;background:#67a892"></div>
<svg class="i" style="left:118.5px;top:449.0px;width:32px;height:32px;color:#fff;stroke-width:1.6;" viewBox="0 0 24 24"><circle cx="12" cy="12" r="10"/><path d="M12 2a14.5 14.5 0 0 0 0 20 14.5 14.5 0 0 0 0-20"/><path d="M2 12h20"/></svg>
<div class="t" style="left:192.5px;top:452.0px;font-size:28px;color:#1f1f23;letter-spacing:0.90px;">3.mydummydomain.com</div>
<div class="b" style="left:765.5px;top:444px;width:119.5px;height:42px;border:2px solid #e0e5ef;border-radius:14px;background:#fcfcfd"></div>
<div class="t" style="left:783.2px;top:454.0px;font-size:24px;color:#1f1f23;letter-spacing:1.06px;">domain</div>
<svg class="i" style="left:1068.5px;top:453.0px;width:24px;height:24px;color:#6b7385;stroke-width:1.9;" viewBox="0 0 24 24"><path d="M8 2v4"/><path d="M16 2v4"/><rect width="18" height="18" x="3" y="4" rx="2"/><path d="M3 10h18"/></svg>
<div class="t" style="left:1102.0px;top:454.0px;font-size:24px;color:#6b7385;letter-spacing:0.57px;">Unknown</div>
<svg class="i" style="left:1434.8px;top:450.7px;width:28px;height:28px;color:#8a8c90;stroke-width:1.8;" viewBox="0 0 24 24"><rect width="14" height="14" x="8" y="8" rx="2" ry="2"/><path d="M4 16c-1.1 0-2-.9-2-2V4c0-1.1.9-2 2-2h10c1.1 0 2 .9 2 2"/></svg>
<div class="cbc" style="left:31px;top:561px"></div><svg class="i" style="left:33.0px;top:563.5px;width:28px;height:28px;color:#fff;stroke-width:1.7;" viewBox="0 0 24 24"><path d="M20 6 9 17l-5-5"/></svg>
<div class="b" style="left:102.5px;top:545px;width:64px;height:64px;border-radius:32px;background:#67a892"></div>
<svg class="i" style="left:118.5px;top:561.0px;width:32px;height:32px;color:#fff;stroke-width:1.6;" viewBox="0 0 24 24"><circle cx="12" cy="12" r="10"/><path d="M12 2a14.5 14.5 0 0 0 0 20 14.5 14.5 0 0 0 0-20"/><path d="M2 12h20"/></svg>
<div class="t" style="left:192.5px;top:564.0px;font-size:28px;color:#1f1f23;letter-spacing:0.80px;">47.mydummydomain.com</div>
<div class="b" style="left:765.5px;top:556px;width:119.5px;height:42px;border:2px solid #e0e5ef;border-radius:14px;background:#fcfcfd"></div>
<div class="t" style="left:783.2px;top:566.0px;font-size:24px;color:#1f1f23;letter-spacing:1.06px;">domain</div>
<svg class="i" style="left:1068.5px;top:565.0px;width:24px;height:24px;color:#6b7385;stroke-width:1.9;" viewBox="0 0 24 24"><path d="M8 2v4"/><path d="M16 2v4"/><rect width="18" height="18" x="3" y="4" rx="2"/><path d="M3 10h18"/></svg>
<div class="t" style="left:1102.0px;top:566.0px;font-size:24px;color:#6b7385;letter-spacing:0.57px;">Unknown</div>
<svg class="i" style="left:1434.8px;top:562.7px;width:28px;height:28px;color:#8a8c90;stroke-width:1.8;" viewBox="0 0 24 24"><rect width="14" height="14" x="8" y="8" rx="2" ry="2"/><path d="M4 16c-1.1 0-2-.9-2-2V4c0-1.1.9-2 2-2h10c1.1 0 2 .9 2 2"/></svg>
<div class="cbc" style="left:31px;top:673px"></div><svg class="i" style="left:33.0px;top:675.5px;width:28px;height:28px;color:#fff;stroke-width:1.7;" viewBox="0 0 24 24"><path d="M20 6 9 17l-5-5"/></svg>
<div class="b" style="left:102.5px;top:657px;width:64px;height:64px;border-radius:32px;background:#67a892"></div>
<svg class="i" style="left:118.5px;top:673.0px;width:32px;height:32px;color:#fff;stroke-width:1.6;" viewBox="0 0 24 24"><circle cx="12" cy="12" r="10"/><path d="M12 2a14.5 14.5 0 0 0 0 20 14.5 14.5 0 0 0 0-20"/><path d="M2 12h20"/></svg>
<div class="t" style="left:192.5px;top:676.0px;font-size:28px;color:#1f1f23;letter-spacing:0.82px;">academiawashingtonribeiraopreto.myd...</div>
<div class="b" style="left:765.5px;top:668px;width:119.5px;height:42px;border:2px solid #e0e5ef;border-radius:14px;background:#fcfcfd"></div>
<div class="t" style="left:783.2px;top:678.0px;font-size:24px;color:#1f1f23;letter-spacing:1.06px;">domain</div>
<svg class="i" style="left:1068.5px;top:677.0px;width:24px;height:24px;color:#6b7385;stroke-width:1.9;" viewBox="0 0 24 24"><path d="M8 2v4"/><path d="M16 2v4"/><rect width="18" height="18" x="3" y="4" rx="2"/><path d="M3 10h18"/></svg>
<div class="t" style="left:1102.0px;top:678.0px;font-size:24px;color:#6b7385;letter-spacing:0.57px;">Unknown</div>
<svg class="i" style="left:1434.8px;top:674.7px;width:28px;height:28px;color:#8a8c90;stroke-width:1.8;" viewBox="0 0 24 24"><rect width="14" height="14" x="8" y="8" rx="2" ry="2"/><path d="M4 16c-1.1 0-2-.9-2-2V4c0-1.1.9-2 2-2h10c1.1 0 2 .9 2 2"/></svg>
<div class="cbc" style="left:31px;top:785px"></div><svg class="i" style="left:33.0px;top:787.5px;width:28px;height:28px;color:#fff;stroke-width:1.7;" viewBox="0 0 24 24"><path d="M20 6 9 17l-5-5"/></svg>
<div class="b" style="left:102.5px;top:769px;width:64px;height:64px;border-radius:32px;background:#67a892"></div>
<svg class="i" style="left:118.5px;top:785.0px;width:32px;height:32px;color:#fff;stroke-width:1.6;" viewBox="0 0 24 24"><circle cx="12" cy="12" r="10"/><path d="M12 2a14.5 14.5 0 0 0 0 20 14.5 14.5 0 0 0 0-20"/><path d="M2 12h20"/></svg>
<div class="t" style="left:192.5px;top:788.0px;font-size:28px;color:#1f1f23;letter-spacing:0.83px;">acme-sentry-4.eng.use1.vn.cloud.mydu...</div>
<div class="b" style="left:765.5px;top:780px;width:119.5px;height:42px;border:2px solid #e0e5ef;border-radius:14px;background:#fcfcfd"></div>
<div class="t" style="left:783.2px;top:790.0px;font-size:24px;color:#1f1f23;letter-spacing:1.06px;">domain</div>
<svg class="i" style="left:1068.5px;top:789.0px;width:24px;height:24px;color:#6b7385;stroke-width:1.9;" viewBox="0 0 24 24"><path d="M8 2v4"/><path d="M16 2v4"/><rect width="18" height="18" x="3" y="4" rx="2"/><path d="M3 10h18"/></svg>
<div class="t" style="left:1102.0px;top:790.0px;font-size:24px;color:#6b7385;letter-spacing:0.57px;">Unknown</div>
<svg class="i" style="left:1434.8px;top:786.7px;width:28px;height:28px;color:#8a8c90;stroke-width:1.8;" viewBox="0 0 24 24"><rect width="14" height="14" x="8" y="8" rx="2" ry="2"/><path d="M4 16c-1.1 0-2-.9-2-2V4c0-1.1.9-2 2-2h10c1.1 0 2 .9 2 2"/></svg>
<div class="cb" style="left:31px;top:897px"></div>
<div class="b" style="left:102.5px;top:881px;width:64px;height:64px;border-radius:32px;background:#67a892"></div>
<svg class="i" style="left:118.5px;top:897.0px;width:32px;height:32px;color:#fff;stroke-width:1.6;" viewBox="0 0 24 24"><circle cx="12" cy="12" r="10"/><path d="M12 2a14.5 14.5 0 0 0 0 20 14.5 14.5 0 0 0 0-20"/><path d="M2 12h20"/></svg>
<div class="t" style="left:192.5px;top:900.0px;font-size:28px;color:#1f1f23;letter-spacing:0.83px;">acme-sentry-4a.eng.use1.vn.cloud.myd...</div>
<div class="b" style="left:765.5px;top:892px;width:119.5px;height:42px;border:2px solid #e0e5ef;border-radius:14px;background:#fcfcfd"></div>
<div class="t" style="left:783.2px;top:902.0px;font-size:24px;color:#1f1f23;letter-spacing:1.06px;">domain</div>
<svg class="i" style="left:1068.5px;top:901.0px;width:24px;height:24px;color:#6b7385;stroke-width:1.9;" viewBox="0 0 24 24"><path d="M8 2v4"/><path d="M16 2v4"/><rect width="18" height="18" x="3" y="4" rx="2"/><path d="M3 10h18"/></svg>
<div class="t" style="left:1102.0px;top:902.0px;font-size:24px;color:#6b7385;letter-spacing:0.57px;">Unknown</div>
<svg class="i" style="left:1434.8px;top:898.7px;width:28px;height:28px;color:#8a8c90;stroke-width:1.8;" viewBox="0 0 24 24"><rect width="14" height="14" x="8" y="8" rx="2" ry="2"/><path d="M4 16c-1.1 0-2-.9-2-2V4c0-1.1.9-2 2-2h10c1.1 0 2 .9 2 2"/></svg>
<div class="cb" style="left:31px;top:1009px"></div>
<div class="b" style="left:102.5px;top:993px;width:64px;height:64px;border-radius:32px;background:#67a892"></div>
<svg class="i" style="left:118.5px;top:1009.0px;width:32px;height:32px;color:#fff;stroke-width:1.6;" viewBox="0 0 24 24"><circle cx="12" cy="12" r="10"/><path d="M12 2a14.5 14.5 0 0 0 0 20 14.5 14.5 0 0 0 0-20"/><path d="M2 12h20"/></svg>
<div class="t" style="left:192.5px;top:1012.0px;font-size:28px;color:#1f1f23;letter-spacing:0.97px;">acs2-poc.voice.mydummydomain.com</div>
<div class="b" style="left:765.5px;top:1004px;width:119.5px;height:42px;border:2px solid #e0e5ef;border-radius:14px;background:#fcfcfd"></div>
<div class="t" style="left:783.2px;top:1014.0px;font-size:24px;color:#1f1f23;letter-spacing:1.06px;">domain</div>
<svg class="i" style="left:1068.5px;top:1013.0px;width:24px;height:24px;color:#6b7385;stroke-width:1.9;" viewBox="0 0 24 24"><path d="M8 2v4"/><path d="M16 2v4"/><rect width="18" height="18" x="3" y="4" rx="2"/><path d="M3 10h18"/></svg>
<div class="t" style="left:1102.0px;top:1014.0px;font-size:24px;color:#6b7385;letter-spacing:0.57px;">Unknown</div>
<svg class="i" style="left:1434.8px;top:1010.7px;width:28px;height:28px;color:#8a8c90;stroke-width:1.8;" viewBox="0 0 24 24"><rect width="14" height="14" x="8" y="8" rx="2" ry="2"/><path d="M4 16c-1.1 0-2-.9-2-2V4c0-1.1.9-2 2-2h10c1.1 0 2 .9 2 2"/></svg>
</div></div>
<div class="b" style="left:2269px;top:94px;width:609px;height:1498px;background:#fff"></div>
<div class="ln" style="left:2267px;top:94px;width:2px;height:1498px"></div>
<div class="b" style="left:2256px;top:826px;width:24px;height:32px;background:#e3e8f1;border-radius:4px"></div>
<svg class="i" style="left:2258.0px;top:832.0px;width:20px;height:20px;color:#222;stroke-width:2.6;" viewBox="0 0 24 24"><circle cx="9" cy="12" r="1"/><circle cx="9" cy="5" r="1"/><circle cx="9" cy="19" r="1"/><circle cx="15" cy="12" r="1"/><circle cx="15" cy="5" r="1"/><circle cx="15" cy="19" r="1"/></svg>
<div class="t" style="left:2302.3px;top:121.0px;font-size:32px;color:#1f1f23;letter-spacing:0.91px;-webkit-text-stroke:0.9px #1f1f23;">12.34.56.78</div>
<svg class="i" style="left:2590.0px;top:118.0px;width:32px;height:32px;color:#5a5d63;stroke-width:1.7;" viewBox="0 0 24 24"><path d="M4.5 16.5c-1.5 1.26-2 5-2 5s3.74-.5 5-2c.71-.84.7-2.13-.09-2.91a2.18 2.18 0 0 0-2.91-.09z"/><path d="m12 15-3-3a22 22 0 0 1 2-3.95A12.88 12.88 0 0 1 22 2c0 2.72-.78 7.5-6 11a22.35 22.35 0 0 1-4 2z"/><path d="M9 12H4s.55-3.03 2-4c1.62-1.08 5 0 5 0"/><path d="M12 15v5s3.03-.55 4-2c1.08-1.62 0-5 0-5"/></svg>
<svg class="i" style="left:2638.0px;top:118.0px;width:32px;height:32px;color:#5a5d63;stroke-width:1.7;" viewBox="0 0 24 24"><path d="M5 12h14"/><path d="M12 5v14"/></svg>
<svg class="i" style="left:2694.7px;top:118.0px;width:32px;height:32px;color:#5a5d63;stroke-width:1.7;" viewBox="0 0 24 24"><path d="M9.937 15.5A2 2 0 0 0 8.5 14.063l-6.135-1.582a.5.5 0 0 1 0-.962L8.5 9.936A2 2 0 0 0 9.937 8.5l1.582-6.135a.5.5 0 0 1 .963 0L14.063 8.5A2 2 0 0 0 15.5 9.937l6.135 1.581a.5.5 0 0 1 0 .964L15.5 14.063a2 2 0 0 0-1.437 1.437l-1.582 6.135a.5.5 0 0 1-.963 0z"/><path d="M20 3v4"/><path d="M22 5h-4"/><path d="M4 17v2"/><path d="M5 18H3"/></svg>
<svg class="i" style="left:2750.0px;top:118.0px;width:32px;height:32px;color:#5a5d63;stroke-width:1.7;" viewBox="0 0 24 24"><path d="M21.174 6.812a1 1 0 0 0-3.986-3.987L3.842 16.174a2 2 0 0 0-.5.83l-1.321 4.352a.5.5 0 0 0 .623.622l4.353-1.32a2 2 0 0 0 .83-.497z"/><path d="m15 5 4 4"/></svg>
<svg class="i" style="left:2806.0px;top:118.0px;width:32px;height:32px;color:#ee8a72;stroke-width:1.7;" viewBox="0 0 24 24"><path d="M3 6h18"/><path d="M19 6v14c0 1-1 2-2 2H7c-1 0-2-1-2-2V6"/><path d="M8 6V4c0-1 1-2 2-2h4c1 0 2 1 2 2v2"/><line x1="10" x2="10" y1="11" y2="17"/><line x1="14" x2="14" y1="11" y2="17"/></svg>
<div class="ln" style="left:2269px;top:178px;width:609px;height:2px"></div>
<div class="clip" style="left:2269px;top:180px;width:609px;height:422px">
<div class="t" style="left:33.3px;top:23.0px;font-size:28px;color:#6b7385;letter-spacing:0.86px;">country</div>
<div class="t" style="left:338.0px;top:24.0px;font-size:28px;color:#6b7385;letter-spacing:0.06px;font-style:italic;-webkit-text-stroke:0.7px #6b7385;">N/A</div>
<div class="ln" style="left:303px;top:1.0px;width:2px;height:71.2px"></div>
<div class="ln" style="left:0;top:71.2px;width:609px;height:2px"></div>
<div class="t" style="left:33.3px;top:101.0px;font-size:28px;color:#6b7385;letter-spacing:0.30px;">address</div>
<div class="t" style="left:338.0px;top:101.0px;font-size:28px;color:#1f1f23;letter-spacing:1.01px;-webkit-text-stroke:0.6px #1f1f23;">12.34.56.78</div>
<svg class="i" style="left:539.0px;top:100.4px;width:28px;height:28px;color:#8a8c90;stroke-width:1.8;" viewBox="0 0 24 24"><rect width="14" height="14" x="8" y="8" rx="2" ry="2"/><path d="M4 16c-1.1 0-2-.9-2-2V4c0-1.1.9-2 2-2h10c1.1 0 2 .9 2 2"/></svg>
<div class="ln" style="left:303px;top:78.2px;width:2px;height:72.8px"></div>
<div class="ln" style="left:0;top:154.0px;width:609px;height:2px"></div>
<div class="t" style="left:33.3px;top:179.0px;font-size:28px;color:#6b7385;letter-spacing:1.00px;">city</div>
<div class="t" style="left:338.0px;top:180.0px;font-size:28px;color:#6b7385;letter-spacing:0.06px;font-style:italic;-webkit-text-stroke:0.7px #6b7385;">N/A</div>
<div class="ln" style="left:303px;top:157.0px;width:2px;height:71.6px"></div>
<div class="ln" style="left:0;top:227.6px;width:609px;height:2px"></div>
<div class="t" style="left:33.3px;top:253.0px;font-size:28px;color:#6b7385;letter-spacing:0.30px;">isp</div>
<div class="t" style="left:338.0px;top:254.0px;font-size:28px;color:#6b7385;letter-spacing:0.06px;font-style:italic;-webkit-text-stroke:0.7px #6b7385;">N/A</div>
<div class="ln" style="left:303px;top:230.6px;width:2px;height:72.0px"></div>
<div class="ln" style="left:0;top:301.6px;width:609px;height:2px"></div>
<div class="t" style="left:33.3px;top:327.0px;font-size:28px;color:#6b7385;letter-spacing:0.73px;">latitude</div>
<div class="t" style="left:338.0px;top:328.0px;font-size:28px;color:#6b7385;letter-spacing:0.06px;font-style:italic;-webkit-text-stroke:0.7px #6b7385;">N/A</div>
<div class="ln" style="left:303px;top:304.6px;width:2px;height:72.3px"></div>
<div class="ln" style="left:0;top:375.9px;width:609px;height:2px"></div>
<div class="t" style="left:33.3px;top:405.0px;font-size:28px;color:#6b7385;letter-spacing:1.21px;">label</div>
<div class="t" style="left:338.0px;top:406.0px;font-size:28px;color:#1f1f23;letter-spacing:1.01px;-webkit-text-stroke:0.6px #1f1f23;">12.34.56.78</div>
<svg class="i" style="left:539.0px;top:405.1px;width:28px;height:28px;color:#8a8c90;stroke-width:1.8;" viewBox="0 0 24 24"><rect width="14" height="14" x="8" y="8" rx="2" ry="2"/><path d="M4 16c-1.1 0-2-.9-2-2V4c0-1.1.9-2 2-2h10c1.1 0 2 .9 2 2"/></svg>
<div class="ln" style="left:303px;top:382.9px;width:2px;height:72.8px"></div>
<div class="ln" style="left:0;top:458.7px;width:609px;height:2px"></div>
</div>
<div class="ln" style="left:2269px;top:601px;width:609px;height:2px"></div>
<div class="b" style="left:2293px;top:628px;width:560.5px;height:513.5px;border:2px solid #e0e5ef;background:#fbfbfc"></div>
<svg class="b" style="left:2295px;top:630px;width:556px;height:509px" viewBox="2295 630 556 509"><g stroke="#999" stroke-width="0.7" opacity="0.75"><path d="M2580.5 918.5L2392.7 976.4"/><path d="M2580.5 918.5L2387.6 950.6"/><path d="M2580.5 918.5L2387.1 923.8"/><path d="M2580.5 918.5L2385.2 897.0"/><path d="M2580.5 918.5L2394.6 870.8"/><path d="M2580.5 918.5L2400.5 846.0"/><path d="M2580.5 918.5L2410.6 819.8"/><path d="M2580.5 918.5L2432.0 793.0"/><path d="M2580.5 918.5L2447.7 773.6"/><path d="M2580.5 918.5L2468.2 759.2"/><path d="M2580.5 918.5L2488.6 744.8"/><path d="M2580.5 918.5L2512.7 738.3"/><path d="M2580.5 918.5L2536.6 731.1"/><path d="M2580.5 918.5L2561.7 724.4"/><path d="M2580.5 918.5L2590.1 723.1"/><path d="M2580.5 918.5L2615.6 726.2"/><path d="M2580.5 918.5L2641.6 732.6"/><path d="M2580.5 918.5L2665.1 741.2"/><path d="M2580.5 918.5L2691.3 756.2"/><path d="M2580.5 918.5L2713.0 770.0"/><path d="M2580.5 918.5L2726.4 791.3"/><path d="M2580.5 918.5L2744.4 810.1"/><path d="M2580.5 918.5L2756.2 837.3"/><path d="M2580.5 918.5L2766.0 858.3"/><path d="M2580.5 918.5L2771.8 887.6"/><path d="M2580.5 918.5L2776.9 912.1"/><path d="M2580.5 918.5L2775.8 939.8"/><path d="M2580.5 918.5L2766.6 964.8"/><path d="M2580.5 918.5L2762.6 992.4"/><path d="M2580.5 918.5L2749.3 1014.4"/><path d="M2580.5 918.5L2736.8 1037.6"/><path d="M2580.5 918.5L2716.2 1056.3"/><path d="M2580.5 918.5L2697.1 1072.4"/><path d="M2580.5 918.5L2678.3 1088.9"/><path d="M2580.5 918.5L2655.9 1100.0"/><path d="M2580.5 918.5L2631.3 1103.9"/><path d="M2580.5 918.5L2608.1 1113.1"/><path d="M2580.5 918.5L2583.2 1115.0"/><path d="M2580.5 918.5L2558.8 1109.7"/><path d="M2580.5 918.5L2520.8 1105.7"/><path d="M2580.5 918.5L2494.9 1092.3"/><path d="M2580.5 918.5L2472.4 1078.2"/><path d="M2580.5 918.5L2450.6 1065.9"/><path d="M2580.5 918.5L2434.6 1043.2"/><path d="M2580.5 918.5L2417.8 1021.9"/><path d="M2580.5 918.5L2402.6 1002.0"/><path d="M2580.5 918.5L2502.6 1064.9"/><path d="M2580.5 918.5L2479.3 1054.2"/><path d="M2580.5 918.5L2458.7 1036.3"/><path d="M2580.5 918.5L2442.5 1014.5"/><path d="M2580.5 918.5L2427.8 989.4"/><path d="M2580.5 918.5L2416.0 967.3"/><path d="M2580.5 918.5L2416.8 941.9"/><path d="M2580.5 918.5L2409.7 913.1"/><path d="M2580.5 918.5L2415.3 888.7"/><path d="M2580.5 918.5L2420.0 861.7"/><path d="M2580.5 918.5L2428.0 837.8"/><path d="M2580.5 918.5L2446.8 814.4"/><path d="M2580.5 918.5L2466.5 799.0"/><path d="M2580.5 918.5L2482.6 779.6"/><path d="M2580.5 918.5L2505.7 765.5"/><path d="M2580.5 918.5L2530.3 756.0"/><path d="M2580.5 918.5L2558.7 753.3"/><path d="M2580.5 918.5L2583.1 748.0"/><path d="M2580.5 918.5L2608.4 754.8"/><path d="M2580.5 918.5L2637.6 757.2"/><path d="M2580.5 918.5L2660.4 772.0"/><path d="M2580.5 918.5L2681.7 787.0"/><path d="M2580.5 918.5L2701.5 802.4"/><path d="M2580.5 918.5L2717.0 824.0"/><path d="M2580.5 918.5L2731.7 844.2"/><path d="M2580.5 918.5L2739.9 871.1"/><path d="M2580.5 918.5L2748.2 895.9"/><path d="M2580.5 918.5L2750.3 924.8"/><path d="M2580.5 918.5L2746.8 949.5"/><path d="M2580.5 918.5L2738.1 973.0"/><path d="M2580.5 918.5L2731.3 997.0"/><path d="M2580.5 918.5L2716.6 1022.8"/><path d="M2580.5 918.5L2697.8 1039.3"/><path d="M2580.5 918.5L2676.5 1058.1"/><path d="M2580.5 918.5L2656.1 1074.1"/><path d="M2580.5 918.5L2630.8 1078.9"/><path d="M2580.5 918.5L2602.6 1087.0"/><path d="M2580.5 918.5L2575.3 1087.5"/><path d="M2580.5 918.5L2548.1 1087.1"/><path d="M2580.5 918.5L2524.4 1079.2"/><path d="M2580.5 918.5L2695.7 837.0"/><path d="M2580.5 918.5L2710.5 857.5"/><path d="M2580.5 918.5L2717.2 881.6"/><path d="M2580.5 918.5L2722.3 906.0"/><path d="M2580.5 918.5L2720.3 932.0"/><path d="M2580.5 918.5L2718.9 957.0"/><path d="M2580.5 918.5L2709.3 982.0"/><path d="M2580.5 918.5L2696.4 1003.4"/><path d="M2580.5 918.5L2677.4 1020.9"/><path d="M2580.5 918.5L2655.7 1034.0"/><path d="M2580.5 918.5L2633.7 1046.1"/><path d="M2580.5 918.5L2611.1 1056.8"/><path d="M2580.5 918.5L2586.7 1061.8"/><path d="M2580.5 918.5L2561.0 1059.7"/><path d="M2580.5 918.5L2537.0 1050.9"/><path d="M2580.5 918.5L2513.2 1042.2"/><path d="M2580.5 918.5L2493.5 1026.6"/><path d="M2580.5 918.5L2471.5 1014.6"/><path d="M2580.5 918.5L2458.9 989.9"/><path d="M2580.5 918.5L2448.9 966.4"/><path d="M2580.5 918.5L2443.7 941.9"/><path d="M2580.5 918.5L2436.1 918.1"/><path d="M2580.5 918.5L2440.1 892.0"/><path d="M2580.5 918.5L2447.2 868.0"/><path d="M2580.5 918.5L2460.3 846.7"/><path d="M2580.5 918.5L2471.9 823.4"/><path d="M2580.5 918.5L2492.1 805.5"/><path d="M2580.5 918.5L2514.6 794.6"/><path d="M2580.5 918.5L2537.1 783.8"/><path d="M2580.5 918.5L2561.6 778.6"/><path d="M2580.5 918.5L2586.9 776.0"/><path d="M2580.5 918.5L2611.9 782.2"/><path d="M2580.5 918.5L2639.0 785.0"/><path d="M2580.5 918.5L2656.5 802.9"/><path d="M2580.5 918.5L2679.1 813.5"/><path d="M2580.5 918.5L2691.9 948.0"/><path d="M2580.5 918.5L2686.2 972.3"/><path d="M2580.5 918.5L2668.9 990.3"/><path d="M2580.5 918.5L2648.9 1005.4"/><path d="M2580.5 918.5L2629.8 1021.4"/><path d="M2580.5 918.5L2605.3 1026.6"/><path d="M2580.5 918.5L2581.2 1033.1"/><path d="M2580.5 918.5L2556.2 1032.3"/><path d="M2580.5 918.5L2532.0 1025.8"/><path d="M2580.5 918.5L2514.2 1008.3"/><path d="M2580.5 918.5L2494.1 993.4"/><path d="M2580.5 918.5L2479.1 973.4"/><path d="M2580.5 918.5L2473.2 949.1"/><path d="M2580.5 918.5L2465.9 925.2"/><path d="M2580.5 918.5L2467.2 900.2"/><path d="M2580.5 918.5L2471.6 875.6"/><path d="M2580.5 918.5L2484.3 854.1"/><path d="M2580.5 918.5L2504.0 838.5"/><path d="M2580.5 918.5L2519.8 819.1"/><path d="M2580.5 918.5L2543.3 810.6"/><path d="M2580.5 918.5L2567.1 803.0"/><path d="M2580.5 918.5L2592.1 803.9"/><path d="M2580.5 918.5L2617.6 807.1"/><path d="M2580.5 918.5L2638.7 820.5"/><path d="M2580.5 918.5L2657.2 837.2"/><path d="M2580.5 918.5L2676.6 853.1"/><path d="M2580.5 918.5L2688.8 874.9"/><path d="M2580.5 918.5L2697.2 898.4"/><path d="M2580.5 918.5L2696.8 923.4"/><path d="M2580.5 918.5L2496.7 897.4"/><path d="M2580.5 918.5L2504.8 868.4"/><path d="M2580.5 918.5L2525.9 852.0"/><path d="M2580.5 918.5L2550.0 835.5"/><path d="M2580.5 918.5L2580.3 830.6"/><path d="M2580.5 918.5L2606.1 831.4"/><path d="M2580.5 918.5L2633.0 845.0"/><path d="M2580.5 918.5L2651.2 868.6"/><path d="M2580.5 918.5L2663.9 897.3"/><path d="M2580.5 918.5L2668.6 922.4"/><path d="M2580.5 918.5L2664.1 954.7"/><path d="M2580.5 918.5L2646.2 979.3"/><path d="M2580.5 918.5L2625.0 996.6"/><path d="M2580.5 918.5L2598.1 1002.7"/><path d="M2580.5 918.5L2567.7 1003.7"/><path d="M2580.5 918.5L2538.4 997.2"/><path d="M2580.5 918.5L2516.1 980.3"/><path d="M2580.5 918.5L2502.0 954.3"/><path d="M2580.5 918.5L2491.1 928.4"/></g><rect x="2504" y="948" width="152" height="36" fill="#fbfbfc" opacity="0.82"/><text x="2580.5" y="971.5" font-family="Liberation Sans, sans-serif" font-size="25" fill="#3a3a3a" text-anchor="middle">12.34.56.78</text><g fill="#67a892"><circle cx="2392.7" cy="976.4" r="12.6"/><circle cx="2387.6" cy="950.6" r="12.6"/><circle cx="2387.1" cy="923.8" r="12.6"/><circle cx="2385.2" cy="897.0" r="12.6"/><circle cx="2394.6" cy="870.8" r="12.6"/><circle cx="2400.5" cy="846.0" r="12.6"/><circle cx="2410.6" cy="819.8" r="12.6"/><circle cx="2432.0" cy="793.0" r="12.6"/><circle cx="2447.7" cy="773.6" r="12.6"/><circle cx="2468.2" cy="759.2" r="12.6"/><circle cx="2488.6" cy="744.8" r="12.6"/><circle cx="2512.7" cy="738.3" r="12.6"/><circle cx="2536.6" cy="731.1" r="12.6"/><circle cx="2561.7" cy="724.4" r="12.6"/><circle cx="2590.1" cy="723.1" r="12.6"/><circle cx="2615.6" cy="726.2" r="12.6"/><circle cx="2641.6" cy="732.6" r="12.6"/><circle cx="2665.1" cy="741.2" r="12.6"/><circle cx="2691.3" cy="756.2" r="12.6"/><circle cx="2713.0" cy="770.0" r="12.6"/><circle cx="2726.4" cy="791.3" r="12.6"/><circle cx="2744.4" cy="810.1" r="12.6"/><circle cx="2756.2" cy="837.3" r="12.6"/><circle cx="2766.0" cy="858.3" r="12.6"/><circle cx="2771.8" cy="887.6" r="12.6"/><circle cx="2776.9" cy="912.1" r="12.6"/><circle cx="2775.8" cy="939.8" r="12.6"/><circle cx="2766.6" cy="964.8" r="12.6"/><circle cx="2762.6" cy="992.4" r="12.6"/><circle cx="2749.3" cy="1014.4" r="12.6"/><circle cx="2736.8" cy="1037.6" r="12.6"/><circle cx="2716.2" cy="1056.3" r="12.6"/><circle cx="2697.1" cy="1072.4" r="12.6"/><circle cx="2678.3" cy="1088.9" r="12.6"/><circle cx="2655.9" cy="1100.0" r="12.6"/><circle cx="2631.3" cy="1103.9" r="12.6"/><circle cx="2608.1" cy="1113.1" r="12.6"/><circle cx="2583.2" cy="1115.0" r="12.6"/><circle cx="2558.8" cy="1109.7" r="12.6"/><circle cx="2520.8" cy="1105.7" r="12.6"/><circle cx="2494.9" cy="1092.3" r="12.6"/><circle cx="2472.4" cy="1078.2" r="12.6"/><circle cx="2450.6" cy="1065.9" r="12.6"/><circle cx="2434.6" cy="1043.2" r="12.6"/><circle cx="2417.8" cy="1021.9" r="12.6"/><circle cx="2402.6" cy="1002.0" r="12.6"/><circle cx="2502.6" cy="1064.9" r="12.6"/><circle cx="2479.3" cy="1054.2" r="12.6"/><circle cx="2458.7" cy="1036.3" r="12.6"/><circle cx="2442.5" cy="1014.5" r="12.6"/><circle cx="2427.8" cy="989.4" r="12.6"/><circle cx="2416.0" cy="967.3" r="12.6"/><circle cx="2416.8" cy="941.9" r="12.6"/><circle cx="2409.7" cy="913.1" r="12.6"/><circle cx="2415.3" cy="888.7" r="12.6"/><circle cx="2420.0" cy="861.7" r="12.6"/><circle cx="2428.0" cy="837.8" r="12.6"/><circle cx="2446.8" cy="814.4" r="12.6"/><circle cx="2466.5" cy="799.0" r="12.6"/><circle cx="2482.6" cy="779.6" r="12.6"/><circle cx="2505.7" cy="765.5" r="12.6"/><circle cx="2530.3" cy="756.0" r="12.6"/><circle cx="2558.7" cy="753.3" r="12.6"/><circle cx="2583.1" cy="748.0" r="12.6"/><circle cx="2608.4" cy="754.8" r="12.6"/><circle cx="2637.6" cy="757.2" r="12.6"/><circle cx="2660.4" cy="772.0" r="12.6"/><circle cx="2681.7" cy="787.0" r="12.6"/><circle cx="2701.5" cy="802.4" r="12.6"/><circle cx="2717.0" cy="824.0" r="12.6"/><circle cx="2731.7" cy="844.2" r="12.6"/><circle cx="2739.9" cy="871.1" r="12.6"/><circle cx="2748.2" cy="895.9" r="12.6"/><circle cx="2750.3" cy="924.8" r="12.6"/><circle cx="2746.8" cy="949.5" r="12.6"/><circle cx="2738.1" cy="973.0" r="12.6"/><circle cx="2731.3" cy="997.0" r="12.6"/><circle cx="2716.6" cy="1022.8" r="12.6"/><circle cx="2697.8" cy="1039.3" r="12.6"/><circle cx="2676.5" cy="1058.1" r="12.6"/><circle cx="2656.1" cy="1074.1" r="12.6"/><circle cx="2630.8" cy="1078.9" r="12.6"/><circle cx="2602.6" cy="1087.0" r="12.6"/><circle cx="2575.3" cy="1087.5" r="12.6"/><circle cx="2548.1" cy="1087.1" r="12.6"/><circle cx="2524.4" cy="1079.2" r="12.6"/><circle cx="2695.7" cy="837.0" r="12.6"/><circle cx="2710.5" cy="857.5" r="12.6"/><circle cx="2717.2" cy="881.6" r="12.6"/><circle cx="2722.3" cy="906.0" r="12.6"/><circle cx="2720.3" cy="932.0" r="12.6"/><circle cx="2718.9" cy="957.0" r="12.6"/><circle cx="2709.3" cy="982.0" r="12.6"/><circle cx="2696.4" cy="1003.4" r="12.6"/><circle cx="2677.4" cy="1020.9" r="12.6"/><circle cx="2655.7" cy="1034.0" r="12.6"/><circle cx="2633.7" cy="1046.1" r="12.6"/><circle cx="2611.1" cy="1056.8" r="12.6"/><circle cx="2586.7" cy="1061.8" r="12.6"/><circle cx="2561.0" cy="1059.7" r="12.6"/><circle cx="2537.0" cy="1050.9" r="12.6"/><circle cx="2513.2" cy="1042.2" r="12.6"/><circle cx="2493.5" cy="1026.6" r="12.6"/><circle cx="2471.5" cy="1014.6" r="12.6"/><circle cx="2458.9" cy="989.9" r="12.6"/><circle cx="2448.9" cy="966.4" r="12.6"/><circle cx="2443.7" cy="941.9" r="12.6"/><circle cx="2436.1" cy="918.1" r="12.6"/><circle cx="2440.1" cy="892.0" r="12.6"/><circle cx="2447.2" cy="868.0" r="12.6"/><circle cx="2460.3" cy="846.7" r="12.6"/><circle cx="2471.9" cy="823.4" r="12.6"/><circle cx="2492.1" cy="805.5" r="12.6"/><circle cx="2514.6" cy="794.6" r="12.6"/><circle cx="2537.1" cy="783.8" r="12.6"/><circle cx="2561.6" cy="778.6" r="12.6"/><circle cx="2586.9" cy="776.0" r="12.6"/><circle cx="2611.9" cy="782.2" r="12.6"/><circle cx="2639.0" cy="785.0" r="12.6"/><circle cx="2656.5" cy="802.9" r="12.6"/><circle cx="2679.1" cy="813.5" r="12.6"/><circle cx="2691.9" cy="948.0" r="12.6"/><circle cx="2686.2" cy="972.3" r="12.6"/><circle cx="2668.9" cy="990.3" r="12.6"/><circle cx="2648.9" cy="1005.4" r="12.6"/><circle cx="2629.8" cy="1021.4" r="12.6"/><circle cx="2605.3" cy="1026.6" r="12.6"/><circle cx="2581.2" cy="1033.1" r="12.6"/><circle cx="2556.2" cy="1032.3" r="12.6"/><circle cx="2532.0" cy="1025.8" r="12.6"/><circle cx="2514.2" cy="1008.3" r="12.6"/><circle cx="2494.1" cy="993.4" r="12.6"/><circle cx="2479.1" cy="973.4" r="12.6"/><circle cx="2473.2" cy="949.1" r="12.6"/><circle cx="2465.9" cy="925.2" r="12.6"/><circle cx="2467.2" cy="900.2" r="12.6"/><circle cx="2471.6" cy="875.6" r="12.6"/><circle cx="2484.3" cy="854.1" r="12.6"/><circle cx="2504.0" cy="838.5" r="12.6"/><circle cx="2519.8" cy="819.1" r="12.6"/><circle cx="2543.3" cy="810.6" r="12.6"/><circle cx="2567.1" cy="803.0" r="12.6"/><circle cx="2592.1" cy="803.9" r="12.6"/><circle cx="2617.6" cy="807.1" r="12.6"/><circle cx="2638.7" cy="820.5" r="12.6"/><circle cx="2657.2" cy="837.2" r="12.6"/><circle cx="2676.6" cy="853.1" r="12.6"/><circle cx="2688.8" cy="874.9" r="12.6"/><circle cx="2697.2" cy="898.4" r="12.6"/><circle cx="2696.8" cy="923.4" r="12.6"/><circle cx="2496.7" cy="897.4" r="12.6"/><circle cx="2504.8" cy="868.4" r="12.6"/><circle cx="2525.9" cy="852.0" r="12.6"/><circle cx="2550.0" cy="835.5" r="12.6"/><circle cx="2580.3" cy="830.6" r="12.6"/><circle cx="2606.1" cy="831.4" r="12.6"/><circle cx="2633.0" cy="845.0" r="12.6"/><circle cx="2651.2" cy="868.6" r="12.6"/><circle cx="2663.9" cy="897.3" r="12.6"/><circle cx="2668.6" cy="922.4" r="12.6"/><circle cx="2664.1" cy="954.7" r="12.6"/><circle cx="2646.2" cy="979.3" r="12.6"/><circle cx="2625.0" cy="996.6" r="12.6"/><circle cx="2598.1" cy="1002.7" r="12.6"/><circle cx="2567.7" cy="1003.7" r="12.6"/><circle cx="2538.4" cy="997.2" r="12.6"/><circle cx="2516.1" cy="980.3" r="12.6"/><circle cx="2502.0" cy="954.3" r="12.6"/><circle cx="2491.1" cy="928.4" r="12.6"/></g><g fill="none" stroke="#f3c3b2" stroke-width="1.6"><circle cx="2713" cy="770" r="13.6"/><circle cx="2432" cy="793" r="13.6"/><circle cx="2756.2" cy="837.3" r="13.6"/><circle cx="2766" cy="858.3" r="13.6"/><circle cx="2558.8" cy="1109.7" r="13.6"/></g><circle cx="2580.5" cy="918.5" r="24.6" fill="#5a9fcc"/></svg>
<svg class="i" style="left:2570.0px;top:907.5px;width:22px;height:22px;color:#fff;stroke-width:1.6;" viewBox="0 0 24 24"><path d="M19.43 12.935c.357-.967.57-1.955.57-2.935a8 8 0 0 0-16 0c0 4.993 5.539 10.193 7.399 11.799a1 1 0 0 0 1.202 0 32.197 32.197 0 0 0 .813-.728"/><circle cx="12" cy="10" r="3"/><path d="m16 18 2 2 4-4"/></svg>
<div class="b" style="left:2295px;top:630px;width:225px;height:55px;background:rgba(255,255,255,.6)"></div>
<div class="t" style="left:2304.7px;top:645.0px;font-size:28px;color:#1f1f23;letter-spacing:0.79px;font-weight:700;">169</div>
<div class="t" style="left:2362.6px;top:645.0px;font-size:28px;color:#555;letter-spacing:0.48px;">neighbor(s)</div>
<div class="ln" style="left:2269px;top:1166px;width:609px;height:2px"></div>
<div class="clip" style="left:2269px;top:1168px;width:609px;height:423px">
<div class="b" style="left:24px;top:24.4px;width:560.5px;height:62.6px;border:2px solid #e0e5ef;border-radius:16px;background:#fff"></div>
<div class="b" style="left:42px;top:33.7px;width:143px;height:44px;background:#b4d4c7;border-radius:14px"></div>
<div class="t" style="left:61.7px;top:45.0px;font-size:24px;color:#1f1f23;letter-spacing:0.20px;">akamai...</div>
<svg class="i" style="left:193.5px;top:39.7px;width:32px;height:32px;color:#666;stroke-width:1.6;" viewBox="0 0 24 24"><path d="M5 12h14"/><path d="m12 5 7 7-7 7"/></svg>
<div class="t" style="left:235.0px;top:45.0px;font-size:23px;color:#777;letter-spacing:-0.07px;">RESOLVE...</div>
<svg class="i" style="left:384.6px;top:39.7px;width:32px;height:32px;color:#666;stroke-width:1.6;" viewBox="0 0 24 24"><path d="M5 12h14"/><path d="m12 5 7 7-7 7"/></svg>
<div class="b" style="left:424px;top:33.7px;width:143.3px;height:44px;background:#b0cfe4;border-radius:14px"></div>
<div class="t" style="left:443.8px;top:45.0px;font-size:24px;color:#1f1f23;letter-spacing:0.32px;">12.34.5...</div>
<div class="b" style="left:24px;top:96.4px;width:560.5px;height:62.6px;border:2px solid #e0e5ef;border-radius:16px;background:#fff"></div>
<div class="b" style="left:42px;top:105.7px;width:143px;height:44px;background:#b4d4c7;border-radius:14px"></div>
<div class="t" style="left:61.7px;top:117.0px;font-size:24px;color:#1f1f23;letter-spacing:0.77px;">gridlog...</div>
<svg class="i" style="left:193.5px;top:111.7px;width:32px;height:32px;color:#666;stroke-width:1.6;" viewBox="0 0 24 24"><path d="M5 12h14"/><path d="m12 5 7 7-7 7"/></svg>
<div class="t" style="left:235.0px;top:117.0px;font-size:23px;color:#777;letter-spacing:-0.07px;">RESOLVE...</div>
<svg class="i" style="left:384.6px;top:111.7px;width:32px;height:32px;color:#666;stroke-width:1.6;" viewBox="0 0 24 24"><path d="M5 12h14"/><path d="m12 5 7 7-7 7"/></svg>
<div class="b" style="left:424px;top:105.7px;width:143.3px;height:44px;background:#b0cfe4;border-radius:14px"></div>
<div class="t" style="left:443.8px;top:117.0px;font-size:24px;color:#1f1f23;letter-spacing:0.32px;">12.34.5...</div>
<div class="b" style="left:24px;top:168.39999999999998px;width:560.5px;height:62.6px;border:2px solid #e0e5ef;border-radius:16px;background:#fff"></div>
<div class="b" style="left:42px;top:177.7px;width:143px;height:44px;background:#b4d4c7;border-radius:14px"></div>
<div class="t" style="left:61.7px;top:189.0px;font-size:24px;color:#1f1f23;letter-spacing:0.77px;">github....</div>
<svg class="i" style="left:193.5px;top:183.7px;width:32px;height:32px;color:#666;stroke-width:1.6;" viewBox="0 0 24 24"><path d="M5 12h14"/><path d="m12 5 7 7-7 7"/></svg>
<div class="t" style="left:235.0px;top:189.0px;font-size:23px;color:#777;letter-spacing:-0.07px;">RESOLVE...</div>
<svg class="i" style="left:384.6px;top:183.7px;width:32px;height:32px;color:#666;stroke-width:1.6;" viewBox="0 0 24 24"><path d="M5 12h14"/><path d="m12 5 7 7-7 7"/></svg>
<div class="b" style="left:424px;top:177.7px;width:143.3px;height:44px;background:#b0cfe4;border-radius:14px"></div>
<div class="t" style="left:443.8px;top:189.0px;font-size:24px;color:#1f1f23;letter-spacing:0.32px;">12.34.5...</div>
<div class="b" style="left:24px;top:240.39999999999998px;width:560.5px;height:62.6px;border:2px solid #e0e5ef;border-radius:16px;background:#fff"></div>
<div class="b" style="left:42px;top:249.7px;width:143px;height:44px;background:#b4d4c7;border-radius:14px"></div>
<div class="t" style="left:61.7px;top:261.0px;font-size:24px;color:#1f1f23;letter-spacing:0.62px;">inferen...</div>
<svg class="i" style="left:193.5px;top:255.7px;width:32px;height:32px;color:#666;stroke-width:1.6;" viewBox="0 0 24 24"><path d="M5 12h14"/><path d="m12 5 7 7-7 7"/></svg>
<div class="t" style="left:235.0px;top:261.0px;font-size:23px;color:#777;letter-spacing:-0.07px;">RESOLVE...</div>
<svg class="i" style="left:384.6px;top:255.7px;width:32px;height:32px;color:#666;stroke-width:1.6;" viewBox="0 0 24 24"><path d="M5 12h14"/><path d="m12 5 7 7-7 7"/></svg>
<div class="b" style="left:424px;top:249.7px;width:143.3px;height:44px;background:#b0cfe4;border-radius:14px"></div>
<div class="t" style="left:443.8px;top:261.0px;font-size:24px;color:#1f1f23;letter-spacing:0.32px;">12.34.5...</div>
<div class="b" style="left:24px;top:312.4px;width:560.5px;height:62.6px;border:2px solid #e0e5ef;border-radius:16px;background:#fff"></div>
<div class="b" style="left:42px;top:321.7px;width:143px;height:44px;background:#b4d4c7;border-radius:14px"></div>
<div class="t" style="left:61.7px;top:333.0px;font-size:24px;color:#1f1f23;letter-spacing:0.92px;">incontr...</div>
<svg class="i" style="left:193.5px;top:327.7px;width:32px;height:32px;color:#666;stroke-width:1.6;" viewBox="0 0 24 24"><path d="M5 12h14"/><path d="m12 5 7 7-7 7"/></svg>
<div class="t" style="left:235.0px;top:333.0px;font-size:23px;color:#777;letter-spacing:-0.07px;">RESOLVE...</div>
<svg class="i" style="left:384.6px;top:327.7px;width:32px;height:32px;color:#666;stroke-width:1.6;" viewBox="0 0 24 24"><path d="M5 12h14"/><path d="m12 5 7 7-7 7"/></svg>
<div class="b" style="left:424px;top:321.7px;width:143.3px;height:44px;background:#b0cfe4;border-radius:14px"></div>
<div class="t" style="left:443.8px;top:333.0px;font-size:24px;color:#1f1f23;letter-spacing:0.32px;">12.34.5...</div>
<div class="b" style="left:24px;top:384.4px;width:560.5px;height:62.6px;border:2px solid #e0e5ef;border-radius:16px;background:#fff"></div>
<div class="b" style="left:42px;top:393.7px;width:143px;height:44px;background:#b4d4c7;border-radius:14px"></div>
<div class="t" style="left:61.7px;top:405.0px;font-size:24px;color:#1f1f23;letter-spacing:1.95px;">image...</div>
<svg class="i" style="left:193.5px;top:399.7px;width:32px;height:32px;color:#666;stroke-width:1.6;" viewBox="0 0 24 24"><path d="M5 12h14"/><path d="m12 5 7 7-7 7"/></svg>
<div class="t" style="left:235.0px;top:405.0px;font-size:23px;color:#777;letter-spacing:-0.07px;">RESOLVE...</div>
<svg class="i" style="left:384.6px;top:399.7px;width:32px;height:32px;color:#666;stroke-width:1.6;" viewBox="0 0 24 24"><path d="M5 12h14"/><path d="m12 5 7 7-7 7"/></svg>
<div class="b" style="left:424px;top:393.7px;width:143.3px;height:44px;background:#b0cfe4;border-radius:14px"></div>
<div class="t" style="left:443.8px;top:405.0px;font-size:24px;color:#1f1f23;letter-spacing:0.32px;">12.34.5...</div>
</div>
<div class="b" style="left:110px;top:1590px;width:2768px;height:208px;background:#fff"></div>
<div class="ln" style="left:110px;top:1589.6px;width:2768px;height:2px"></div>
<div class="ln" style="left:110px;top:1655.7px;width:2768px;height:2px"></div>
<svg class="i" style="left:146.0px;top:1610.2px;width:28px;height:28px;color:#5a5d63;stroke-width:1.7;" viewBox="0 0 24 24"><polyline points="4 17 10 11 4 5"/><line x1="12" x2="23" y1="19" y2="19"/></svg>
<div class="t" style="left:186.5px;top:1612.0px;font-size:25px;color:#6b7385;letter-spacing:0.23px;-webkit-text-stroke:0.5px #6b7385;">Console (Open)</div>
<div class="t" style="left:376.0px;top:1614.0px;font-size:23px;color:#a0a4ad;letter-spacing:-1.06px;">(⌘D)</div>
<svg class="i" style="left:2479.0px;top:1607.0px;width:32px;height:32px;color:#a0a3a9;stroke-width:1.6;" viewBox="0 0 24 24"><rect width="18" height="11" x="3" y="11" rx="2" ry="2"/><path d="M7 11V7a5 5 0 0 1 9.9-1"/></svg>
<div class="t" style="left:2521.0px;top:1612.0px;font-size:25px;color:#6b7385;letter-spacing:0.47px;-webkit-text-stroke:0.5px #6b7385;">Vault</div>
<svg class="i" style="left:2634.0px;top:1607.5px;width:32px;height:32px;color:#a0a3a9;stroke-width:1.8;" viewBox="0 0 24 24"><circle cx="12" cy="12" r="10"/><path d="M12 16v-4"/><path d="M12 8h.01"/></svg>
<svg class="i" style="left:2722.0px;top:1607.5px;width:32px;height:32px;color:#a0a3a9;stroke-width:1.8;" viewBox="0 0 24 24"><circle cx="12" cy="12" r="10"/><path d="M9.09 9a3 3 0 0 1 5.83 1c0 2-3 3-3 3"/><path d="M12 17h.01"/></svg>
<svg class="i" style="left:2809.0px;top:1606.5px;width:34px;height:34px;color:#a0a3a9;stroke-width:1.7;" viewBox="0 0 24 24"><circle cx="12" cy="12" r="4"/><path d="M12 2v2"/><path d="M12 20v2"/><path d="m4.93 4.93 1.41 1.41"/><path d="m17.66 17.66 1.41 1.41"/><path d="M2 12h2"/><path d="M20 12h2"/><path d="m6.34 17.66-1.41 1.41"/><path d="m19.07 4.93-1.41 1.41"/></svg>
<div class="clip" style="left:110px;top:1658px;width:2768px;height:140px">
<svg class="i" style="left:16.2px;top:-26.4px;width:32px;height:32px;color:#16a34a;stroke-width:2.1;" viewBox="0 0 24 24"><path d="M5.8 11.3 2 22l10.7-3.79"/><path d="M4 3h.01"/><path d="M22 8h.01"/><path d="M15 2h.01"/><path d="M22 20h.01"/><path d="m22 2-2.24.75a2.9 2.9 0 0 0-1.96 3.12c.1.86-.57 1.63-1.45 1.63h-.38c-.86 0-1.6.6-1.76 1.44L14 10"/><path d="m22 13-.82-.33c-.86-.34-1.82.2-1.98 1.11c-.11.7-.72 1.22-1.43 1.22H17"/><path d="m11 2 .33.82c.34.86-.2 1.82-1.11 1.98C9.52 4.9 9 5.52 9 6.23V7"/><path d="M11 13c1.93 1.93 2.83 4.17 2 5-.83.83-3.07-.07-5-2-1.93-1.93-2.83-4.17-2-5 .83-.83 3.07.07 5 2Z"/></svg>
<div class="b" style="left:200px;top:-32.3px;width:157px;height:40px;background:#d5f5df;border-radius:12px"></div>
<div class="t" style="left:218.8px;top:-21.0px;font-size:19px;color:#16a34a;letter-spacing:0.16px;">COMPLETED</div>
<div class="t" style="left:64.6px;top:-22.0px;font-size:23px;color:#1f1f23;letter-spacing:1.63px;">11:36:48</div>
<div class="t" style="left:383.0px;top:-25.0px;font-size:28px;color:#1f1f23;letter-spacing:0.59px;">Transform domain_to_ip finished in 2.31s.</div>
<svg class="i" style="left:16.2px;top:33.6px;width:32px;height:32px;color:#16a34a;stroke-width:2.1;" viewBox="0 0 24 24"><path d="M5.8 11.3 2 22l10.7-3.79"/><path d="M4 3h.01"/><path d="M22 8h.01"/><path d="M15 2h.01"/><path d="M22 20h.01"/><path d="m22 2-2.24.75a2.9 2.9 0 0 0-1.96 3.12c.1.86-.57 1.63-1.45 1.63h-.38c-.86 0-1.6.6-1.76 1.44L14 10"/><path d="m22 13-.82-.33c-.86-.34-1.82.2-1.98 1.11c-.11.7-.72 1.22-1.43 1.22H17"/><path d="m11 2 .33.82c.34.86-.2 1.82-1.11 1.98C9.52 4.9 9 5.52 9 6.23V7"/><path d="M11 13c1.93 1.93 2.83 4.17 2 5-.83.83-3.07-.07-5-2-1.93-1.93-2.83-4.17-2-5 .83-.83 3.07.07 5 2Z"/></svg>
<div class="b" style="left:200px;top:27.700000000000003px;width:157px;height:40px;background:#d5f5df;border-radius:12px"></div>
<div class="t" style="left:218.8px;top:39.0px;font-size:19px;color:#16a34a;letter-spacing:0.16px;">COMPLETED</div>
<div class="t" style="left:64.6px;top:38.0px;font-size:23px;color:#1f1f23;letter-spacing:1.63px;">11:36:48</div>
<div class="t" style="left:383.0px;top:35.0px;font-size:28px;color:#1f1f23;letter-spacing:0.63px;">Transform completed successfully.</div>
<svg class="i" style="left:16.1px;top:93.9px;width:32px;height:32px;color:#2563eb;stroke-width:2.2;" viewBox="0 0 24 24"><circle cx="12" cy="12" r="10"/><path d="M12 16v-4"/><path d="M12 8h.01"/></svg>
<div class="b" style="left:200px;top:87.7px;width:83px;height:40px;background:#e6e7ea;border-radius:12px"></div>
<div class="t" style="left:219.2px;top:100.0px;font-size:18.5px;color:#2563eb;letter-spacing:0.14px;">INFO</div>
<div class="t" style="left:64.6px;top:98.0px;font-size:23px;color:#1f1f23;letter-spacing:1.63px;">11:36:48</div>
<div class="t" style="left:309.0px;top:95.0px;font-size:28px;color:#1f1f23;letter-spacing:0.43px;">Transform execution log finalized at</div>
<div class="t" style="left:774.5px;top:95.0px;font-size:28px;color:#1f1f23;letter-spacing:0.58px;">transform_logs/transform_execution_</div>
<div class="t" style="left:1257.5px;top:95.0px;font-size:28px;color:#1f1f23;letter-spacing:1.14px;">535a1529-c305-4729-9d74-818176700c01</div>
<div class="t" style="left:1830.0px;top:95.0px;font-size:28px;color:#1f1f23;letter-spacing:1.24px;">_4daa8b01-e66e-4476-95be-99dac98638b0.json</div>
<svg class="i" style="left:2637.5px;top:28.0px;width:30px;height:30px;color:#6b6e75;stroke-width:1.6;" viewBox="0 0 24 24"><path d="M3 12a9 9 0 1 0 9-9 9.75 9.75 0 0 0-6.74 2.74L3 8"/><path d="M3 3v5h5"/></svg>
<svg class="i" style="left:2709.5px;top:28.0px;width:30px;height:30px;color:#6b6e75;stroke-width:1.6;" viewBox="0 0 24 24"><path d="M3 6h18"/><path d="M19 6v14c0 1-1 2-2 2H7c-1 0-2-1-2-2V6"/><path d="M8 6V4c0-1 1-2 2-2h4c1 0 2 1 2 2v2"/><line x1="10" x2="10" y1="11" y2="17"/><line x1="14" x2="14" y1="11" y2="17"/></svg>
</div>
</body></html>
